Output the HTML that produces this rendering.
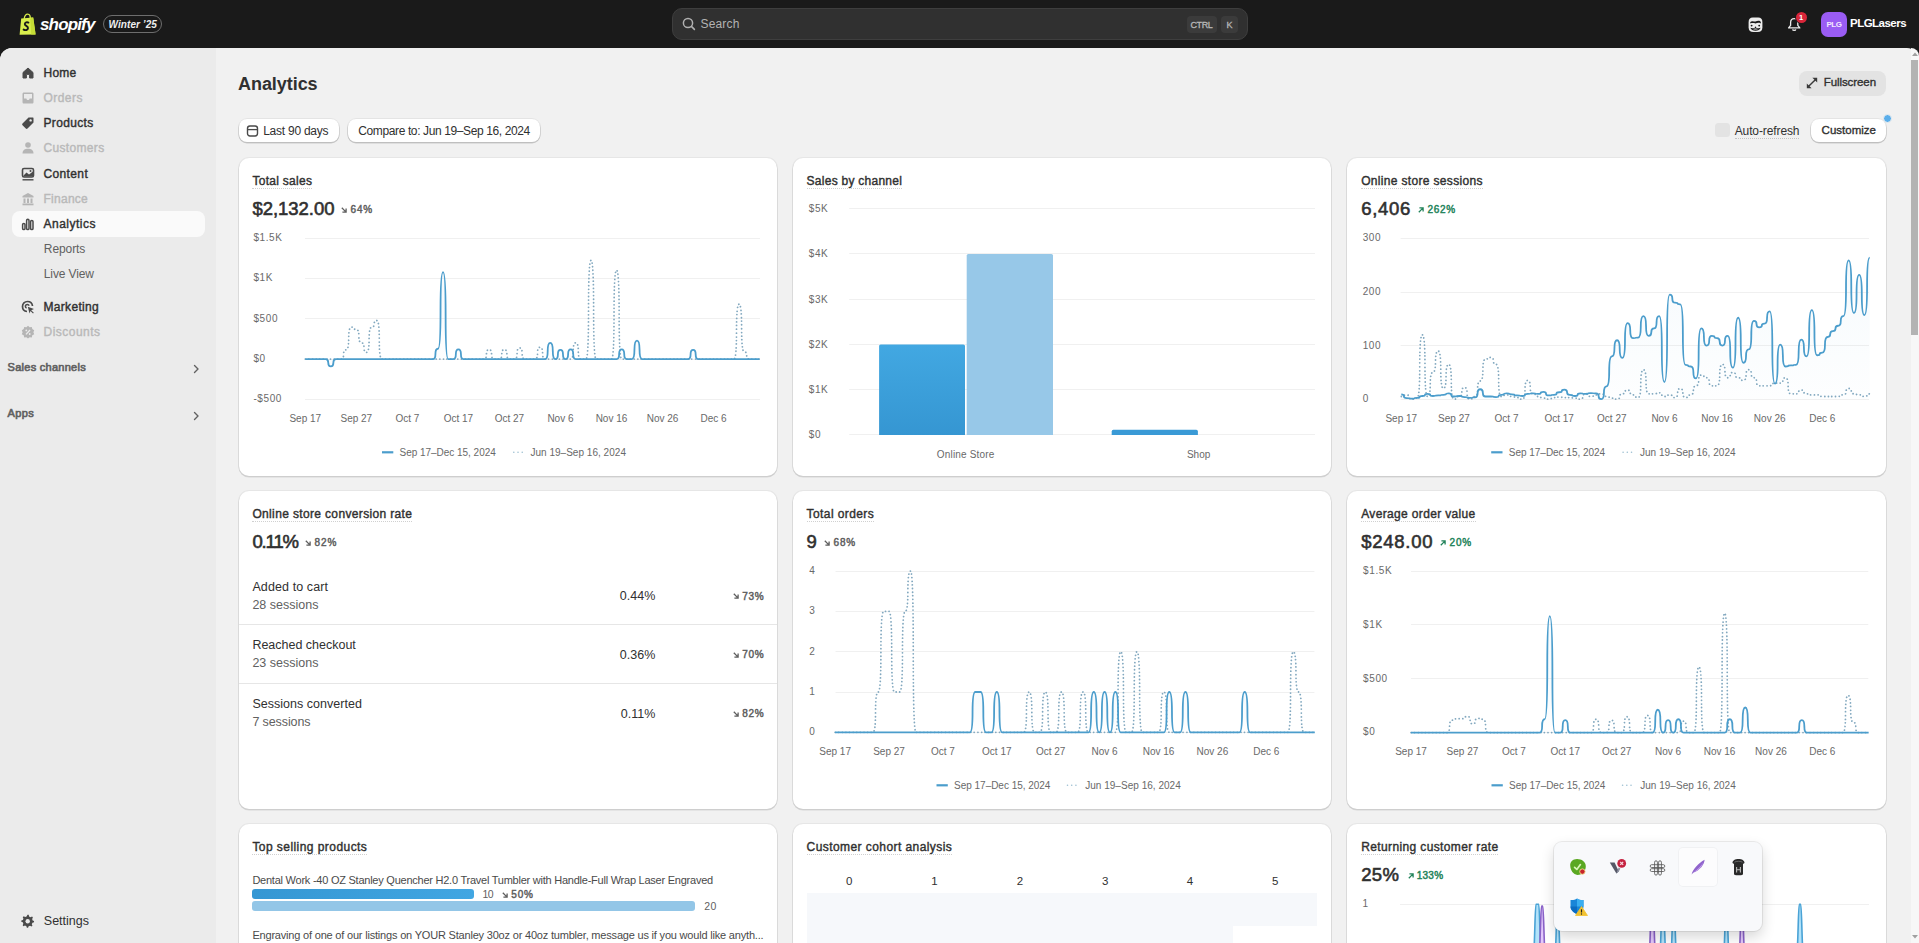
<!DOCTYPE html><html><head><meta charset="utf-8"><title>Analytics</title><style>
*{margin:0;padding:0;box-sizing:border-box}
html,body{width:1919px;height:943px;overflow:hidden;background:#1a1a1a;font-family:"Liberation Sans",sans-serif;color:#303030}
.t{position:absolute;white-space:nowrap}
.abs{position:absolute}
#main{position:absolute;left:0;top:48px;width:1919px;height:895px;background:#f1f1f1;border-radius:12px 12px 0 0;overflow:hidden}
#side{position:absolute;left:0;top:0;width:216px;height:895px;background:#ebebeb}
.card{position:absolute;background:#fff;border-radius:10px;box-shadow:0 0 0 1px rgba(0,0,0,.045),0 1px 0 0.5px rgba(0,0,0,.10)}
.btn{position:absolute;background:#fff;border-radius:8px;box-shadow:0 0 0 1px rgba(0,0,0,.05),0 1px 0 0.5px rgba(0,0,0,.16)}
.dotu{border-bottom:1px dotted #b5b5b5}
</style></head><body><svg class="abs" style="left:18px;top:13px" width="20" height="23" viewBox="0 0 20 23">
<path d="M3.2,5.6 L15.2,4.6 L17.6,21.4 L1.6,21.8 Z" fill="#d9ee4c"/>
<path d="M12.2,4.8 L15.2,4.6 L17.6,21.4 L13.2,21.6 Z" fill="#c5dc35"/>
<path d="M6.2,6 C6.4,2.4 8.4,1 9.8,1.2 C11.6,1.4 12.4,3.4 12.2,5.8" fill="none" stroke="#d9ee4c" stroke-width="1.3"/>
<path d="M10.4,9.6 C9.2,8.9 6.9,9.3 6.8,11 C6.7,13 10.2,12.8 10,15.2 C9.8,17.2 7.4,17.6 5.6,16.6" fill="none" stroke="#1a1a1a" stroke-width="1.9" stroke-linecap="round"/>
</svg>
<div class="t" style="top:13.80px;font-size:17px;line-height:22px;color:#ffffff;font-weight:700;font-style:italic;letter-spacing:-0.850px;left:40.00px">shopify</div>
<div class="abs" style="left:103px;top:15px;width:59px;height:18px;border:1.5px solid #6e6e6e;border-radius:9px"></div>
<div class="t" style="top:17.50px;font-size:10px;line-height:13px;color:#eeeeee;font-weight:700;font-style:italic;letter-spacing:0.080px;left:108.50px">Winter ’25</div>
<div class="abs" style="left:672px;top:8px;width:576px;height:32px;background:#303030;border:1px solid #3e3e3e;border-radius:10px"></div>
<svg class="abs" style="left:682px;top:17px" width="14" height="14" viewBox="0 0 14 14"><circle cx="6" cy="6" r="4.6" fill="none" stroke="#b0b0b0" stroke-width="1.5"/><path d="M9.4,9.4 L12.4,12.4" stroke="#b0b0b0" stroke-width="1.6" stroke-linecap="round"/></svg>
<div class="t" style="top:16.00px;font-size:12px;line-height:16px;color:#b3b3b3;letter-spacing:0.164px;left:700.50px">Search</div>
<div class="abs" style="left:1186.5px;top:16px;width:30px;height:17px;background:#3b3b3b;border-radius:4px"></div>
<div class="t" style="top:18.60px;font-size:9px;line-height:12px;color:#b8b8b8;-webkit-text-stroke:0.3px #b8b8b8;letter-spacing:-0.375px;left:1201.50px;transform:translateX(-50%)">CTRL</div>
<div class="abs" style="left:1221px;top:16px;width:17px;height:17px;background:#3b3b3b;border-radius:4px"></div>
<div class="t" style="top:18.60px;font-size:9px;line-height:12px;color:#b8b8b8;-webkit-text-stroke:0.3px #b8b8b8;left:1229.50px;transform:translateX(-50%)">K</div>
<svg class="abs" style="left:1747.5px;top:16.5px" width="15" height="15.5" viewBox="0 0 15 15.5">
<path d="M4.8,0.4 L10.2,0.4 C13,0.4 14.4,2 14.4,5 L14.4,10.4 C14.4,13.4 12.6,15 9.6,15 L5.4,15 C2.4,15 0.6,13.4 0.6,10.4 L0.6,5 C0.6,2 2,0.4 4.8,0.4 Z" fill="#ececec"/>
<path d="M2.2,5.2 C3.5,3.6 5.5,4.2 7.5,4.6 C9.5,3.6 12,3.4 12.9,5.2 L12.6,6.4 C11,5.6 9.5,5.8 7.5,6.4 C5.5,5.8 3.8,5.8 2.4,6.4 Z" fill="#1a1a1a"/>
<circle cx="3.6" cy="8.6" r="0.95" fill="#1a1a1a"/><circle cx="11.2" cy="8.6" r="0.95" fill="#1a1a1a"/>
<path d="M7.5,9.3 L8.5,10.9 L6.5,10.9 Z" fill="#1a1a1a"/>
<path d="M2.4,10.8 C3.2,14.6 11.8,14.6 12.6,10.8 C10.5,11.6 4.5,11.6 2.4,10.8 Z" fill="#1a1a1a"/>
<path d="M4.6,12.2 C6,12.6 9,12.6 10.4,12.2 C9.6,13.3 5.4,13.3 4.6,12.2 Z" fill="#ececec"/>
</svg>
<svg class="abs" style="left:1787px;top:17px" width="15" height="15" viewBox="0 0 15 15">
<path d="M7.2,1.6 C4.9,1.6 3.6,3.4 3.6,5.6 L3.6,8.4 L1.6,10.9 L12.8,10.9 L10.8,8.4 L10.8,5.6 C10.8,3.4 9.5,1.6 7.2,1.6 Z" fill="none" stroke="#ececec" stroke-width="1.3" stroke-linejoin="round"/>
<path d="M5.6,12.4 C5.8,13.8 8.6,13.8 8.8,12.4" fill="none" stroke="#ececec" stroke-width="1.3"/>
</svg>
<div class="abs" style="left:1795.5px;top:12.4px;width:11px;height:11px;border-radius:50%;background:#d9263a;box-shadow:0 0 0 1px #1a1a1a"></div>
<div class="t" style="top:13.40px;font-size:7.5px;line-height:9px;color:#ffffff;font-weight:700;left:1801.20px;transform:translateX(-50%)">1</div>
<div class="abs" style="left:1821px;top:12px;width:26px;height:25px;border-radius:7px;background:#9a5cf3"></div>
<div class="t" style="top:19.50px;font-size:8px;line-height:10px;color:#f3e8ff;font-weight:700;letter-spacing:-0.484px;left:1834.00px;transform:translateX(-50%)">PLG</div>
<div class="t" style="top:16.00px;font-size:11.5px;line-height:15px;color:#ffffff;font-weight:700;letter-spacing:-0.523px;left:1850.00px">PLGLasers</div>
<div id="main">
<div id="side"></div>
</div>
<div class="abs" style="left:11.5px;top:210.7px;width:193.3px;height:26px;background:#fafafa;border-radius:8px"></div>
<svg class="abs" style="left:20.5px;top:65.5px" width="14" height="14" viewBox="0 0 14 14"><path d="M2,6.5 L7,2 L12,6.5 L12,12 L8.6,12 L8.6,9 C8.6,8 5.4,8 5.4,9 L5.4,12 L2,12 Z" fill="#4a4a4a" stroke="#4a4a4a" stroke-width="1" stroke-linejoin="round"/></svg>
<div class="t" style="top:64.50px;font-size:12px;line-height:16px;color:#303030;-webkit-text-stroke:0.4px #303030;letter-spacing:0.246px;left:43.50px">Home</div>
<svg class="abs" style="left:20.5px;top:90.8px" width="14" height="14" viewBox="0 0 14 14"><path d="M1.5,3 C1.5,2 2,1.5 3,1.5 L11,1.5 C12,1.5 12.5,2 12.5,3 L12.5,11 C12.5,12 12,12.5 11,12.5 L3,12.5 C2,12.5 1.5,12 1.5,11 Z" fill="#b5b5b5"/><path d="M3,3 L11,3 L11,7.5 L8.6,7.5 C8.4,8.6 7.8,9 7,9 C6.2,9 5.6,8.6 5.4,7.5 L3,7.5 Z" fill="#ebebeb"/></svg>
<div class="t" style="top:89.80px;font-size:12px;line-height:16px;color:#b9b9b9;-webkit-text-stroke:0.4px #b9b9b9;letter-spacing:0.455px;left:43.50px">Orders</div>
<svg class="abs" style="left:20.5px;top:115.7px" width="14" height="14" viewBox="0 0 14 14"><path d="M7.5,1.5 L12,1.5 C12.3,1.5 12.5,1.7 12.5,2 L12.5,6.5 L6.5,12.5 C6,13 5.3,13 4.8,12.5 L1.5,9.2 C1,8.7 1,8 1.5,7.5 Z" fill="#4a4a4a"/><circle cx="9.6" cy="4.4" r="1.2" fill="#ebebeb"/></svg>
<div class="t" style="top:114.70px;font-size:12px;line-height:16px;color:#303030;-webkit-text-stroke:0.4px #303030;letter-spacing:0.332px;left:43.50px">Products</div>
<svg class="abs" style="left:20.5px;top:141px" width="14" height="14" viewBox="0 0 14 14"><circle cx="7" cy="4" r="2.8" fill="#b5b5b5"/><path d="M1.5,12.5 C1.5,9 4,7.8 7,7.8 C10,7.8 12.5,9 12.5,12.5 Z" fill="#b5b5b5"/></svg>
<div class="t" style="top:140.00px;font-size:12px;line-height:16px;color:#b9b9b9;-webkit-text-stroke:0.4px #b9b9b9;letter-spacing:0.332px;left:43.50px">Customers</div>
<svg class="abs" style="left:20.5px;top:166.6px" width="14" height="14" viewBox="0 0 14 14"><rect x="1.5" y="1.5" width="11" height="8.5" rx="1.5" fill="none" stroke="#4a4a4a" stroke-width="1.6"/><path d="M2.5,8.5 L5.5,5.5 L8,7.5 L12,4.5 L12,9.5 L2.5,9.5 Z" fill="#4a4a4a"/><circle cx="9.5" cy="4" r="1" fill="#4a4a4a"/><path d="M1.5,12.8 L12.5,12.8" stroke="#4a4a4a" stroke-width="1.4"/></svg>
<div class="t" style="top:165.60px;font-size:12px;line-height:16px;color:#303030;-webkit-text-stroke:0.4px #303030;letter-spacing:0.369px;left:43.50px">Content</div>
<svg class="abs" style="left:20.5px;top:191.5px" width="14" height="14" viewBox="0 0 14 14"><path d="M7,1 L12.5,4 L12.5,5.5 L1.5,5.5 L1.5,4 Z" fill="#b5b5b5"/><rect x="2.5" y="6.5" width="2" height="4.5" fill="#b5b5b5"/><rect x="6" y="6.5" width="2" height="4.5" fill="#b5b5b5"/><rect x="9.5" y="6.5" width="2" height="4.5" fill="#b5b5b5"/><rect x="1.5" y="11.5" width="11" height="1.8" fill="#b5b5b5"/></svg>
<div class="t" style="top:190.50px;font-size:12px;line-height:16px;color:#b9b9b9;-webkit-text-stroke:0.4px #b9b9b9;letter-spacing:0.259px;left:43.50px">Finance</div>
<svg class="abs" style="left:20.5px;top:216.5px" width="14" height="14" viewBox="0 0 14 14"><rect x="1.6" y="6.4" width="2.4" height="6.2" rx="1.2" fill="none" stroke="#4a4a4a" stroke-width="1.5"/><rect x="5.6" y="2.2" width="2.4" height="10.4" rx="1.2" fill="none" stroke="#4a4a4a" stroke-width="1.5"/><rect x="9.6" y="3.4" width="2.4" height="9.2" rx="1.2" fill="none" stroke="#4a4a4a" stroke-width="1.5"/></svg>
<div class="t" style="top:215.50px;font-size:12px;line-height:16px;color:#303030;-webkit-text-stroke:0.4px #303030;letter-spacing:0.498px;left:43.50px">Analytics</div>
<svg class="abs" style="left:20.5px;top:300px" width="14" height="14" viewBox="0 0 14 14"><path d="M11.5,6 C11.2,3.4 9.2,1.5 6.5,1.5 C3.7,1.5 1.5,3.7 1.5,6.5 C1.5,9.2 3.4,11.2 6,11.5" fill="none" stroke="#4a4a4a" stroke-width="1.7"/><path d="M8.2,5.6 C7.8,4.8 7.2,4.4 6.5,4.4 C5.3,4.4 4.4,5.3 4.4,6.5 C4.4,7.2 4.8,7.8 5.6,8.2" fill="none" stroke="#4a4a4a" stroke-width="1.5"/><path d="M6.8,6.8 L13,9 L10.2,10.2 L12.8,12.8 L12,13.5 L9.5,11 L8.5,13.5 Z" fill="#4a4a4a"/></svg>
<div class="t" style="top:299.00px;font-size:12px;line-height:16px;color:#303030;-webkit-text-stroke:0.4px #303030;letter-spacing:0.312px;left:43.50px">Marketing</div>
<svg class="abs" style="left:20.5px;top:325px" width="14" height="14" viewBox="0 0 14 14"><path d="M7,0.8 L8.6,2.2 L10.8,2 L11.3,4.1 L13.2,5.2 L12.4,7.2 L13.2,9.2 L11.3,10.3 L10.8,12.4 L8.6,12.2 L7,13.6 L5.4,12.2 L3.2,12.4 L2.7,10.3 L0.8,9.2 L1.6,7.2 L0.8,5.2 L2.7,4.1 L3.2,2 L5.4,2.2 Z" fill="#b5b5b5"/><path d="M5,9.4 L9,5" stroke="#ebebeb" stroke-width="1.3"/><circle cx="5.3" cy="5.4" r="0.9" fill="#ebebeb"/><circle cx="8.7" cy="9" r="0.9" fill="#ebebeb"/></svg>
<div class="t" style="top:324.00px;font-size:12px;line-height:16px;color:#b9b9b9;-webkit-text-stroke:0.4px #b9b9b9;letter-spacing:0.479px;left:43.50px">Discounts</div>
<div class="t" style="top:240.80px;font-size:12px;line-height:16px;color:#616161;letter-spacing:-0.074px;left:43.80px">Reports</div>
<div class="t" style="top:265.70px;font-size:12px;line-height:16px;color:#616161;letter-spacing:-0.127px;left:43.80px">Live View</div>
<div class="t" style="top:360.00px;font-size:11px;line-height:14px;color:#616161;-webkit-text-stroke:0.65px #616161;letter-spacing:0.267px;left:7.60px">Sales channels</div>
<div class="t" style="top:406.40px;font-size:11px;line-height:14px;color:#616161;-webkit-text-stroke:0.65px #616161;letter-spacing:0.352px;left:7.60px">Apps</div>
<svg class="abs" style="left:191px;top:362.5px" width="10" height="12" viewBox="0 0 10 12"><path d="M3.5,2.5 L7,6 L3.5,9.5" fill="none" stroke="#616161" stroke-width="1.4" stroke-linecap="round" stroke-linejoin="round"/></svg>
<svg class="abs" style="left:191px;top:409.5px" width="10" height="12" viewBox="0 0 10 12"><path d="M3.5,2.5 L7,6 L3.5,9.5" fill="none" stroke="#616161" stroke-width="1.4" stroke-linecap="round" stroke-linejoin="round"/></svg>
<svg class="abs" style="left:20.5px;top:913.5px" width="14" height="14" viewBox="0 0 14 14"><path d="M7,0.8 L8.3,0.8 L8.7,2.6 L10.2,3.4 L11.9,2.7 L12.8,3.7 L12,5.3 L12.5,6.9 L14,7.6 L14,8.9 L12.3,9.4 L11.6,10.9 L12.3,12.5 L11.3,13.4 L9.7,12.6 L8.2,13.2 L7.6,14.8 L6.3,14.8 L5.8,13.1 L4.3,12.4 L2.7,13.1 L1.8,12.1 L2.5,10.5 L1.9,9 L0.3,8.3 L0.3,7 L2,6.5 L2.6,5 L1.9,3.4 L2.9,2.5 L4.5,3.3 L6,2.6 Z" fill="#4a4a4a" transform="scale(0.93)"/><circle cx="6.7" cy="7.2" r="2.2" fill="#ebebeb"/></svg>
<div class="t" style="top:912.90px;font-size:12.5px;line-height:16px;color:#303030;letter-spacing:0.004px;left:43.80px">Settings</div>
<div class="t" style="top:72.70px;font-size:18px;line-height:23px;color:#303030;font-weight:700;letter-spacing:-0.051px;left:238.00px">Analytics</div>
<div class="btn" style="left:238.7px;top:119px;width:100.5px;height:23.4px"></div>
<svg class="abs" style="left:246px;top:124px" width="13" height="14" viewBox="0 0 13 14"><rect x="1.5" y="2" width="10" height="10" rx="2.4" fill="none" stroke="#4a4a4a" stroke-width="1.4"/><path d="M1.8,5.6 L11.2,5.6" stroke="#4a4a4a" stroke-width="1.3"/></svg>
<div class="t" style="top:122.50px;font-size:12px;line-height:16px;color:#303030;letter-spacing:-0.243px;left:263.20px">Last 90 days</div>
<div class="btn" style="left:347.8px;top:119px;width:192.3px;height:23.4px"></div>
<div class="t" style="top:122.50px;font-size:12px;line-height:16px;color:#303030;letter-spacing:-0.384px;left:358.30px">Compare to: Jun 19–Sep 16, 2024</div>
<div class="abs" style="left:1798.6px;top:71px;width:87.7px;height:24.7px;background:#e3e3e3;border-radius:8px"></div>
<svg class="abs" style="left:1805px;top:76px" width="14" height="14" viewBox="0 0 14 14"><path d="M3.4,10.6 L10.6,3.4" stroke="#3a3a3a" stroke-width="1.4"/><path d="M12.2,1.8 L12.2,6.6 L7.4,1.8 Z" fill="#3a3a3a"/><path d="M1.8,12.2 L1.8,7.4 L6.6,12.2 Z" fill="#3a3a3a"/></svg>
<div class="t" style="top:74.80px;font-size:11.5px;line-height:15px;color:#303030;-webkit-text-stroke:0.35px #303030;letter-spacing:-0.075px;left:1823.70px">Fullscreen</div>
<div class="abs" style="left:1715px;top:122.7px;width:14.7px;height:14.8px;background:#e3e3e3;border-radius:3.5px"></div>
<div class="t" style="top:122.50px;font-size:12px;line-height:16px;color:#303030;letter-spacing:-0.110px;left:1734.70px">Auto-refresh</div>
<div class="abs" style="left:1734.7px;top:137.5px;width:64.7px;border-bottom:1px dotted #c4c4c4"></div>
<div class="btn" style="left:1811.3px;top:119px;width:75px;height:23.3px"></div>
<div class="t" style="top:123.00px;font-size:11.5px;line-height:15px;color:#303030;-webkit-text-stroke:0.35px #303030;letter-spacing:0.010px;left:1821.60px">Customize</div>
<div class="abs" style="left:1882.5px;top:113.9px;width:9px;height:9px;border-radius:50%;background:#5aaeea;border:1.5px solid #f1f1f1"></div>
<div class="card" style="left:238.6px;top:158.4px;width:538.6px;height:317.6px"></div>
<div class="card" style="left:792.8px;top:158.4px;width:538.6px;height:317.6px"></div>
<div class="card" style="left:1347.4px;top:158.4px;width:538.6px;height:317.6px"></div>
<div class="card" style="left:238.6px;top:491.3px;width:538.6px;height:317.6px"></div>
<div class="card" style="left:792.8px;top:491.3px;width:538.6px;height:317.6px"></div>
<div class="card" style="left:1347.4px;top:491.3px;width:538.6px;height:317.6px"></div>
<div class="card" style="left:238.6px;top:824.4px;width:538.6px;height:317.6px"></div>
<div class="card" style="left:792.8px;top:824.4px;width:538.6px;height:317.6px"></div>
<div class="card" style="left:1347.4px;top:824.4px;width:538.6px;height:317.6px"></div>
<div class="t" style="top:172.60px;font-size:12px;line-height:16px;color:#303030;-webkit-text-stroke:0.4px #303030;letter-spacing:0.283px;left:252.40px">Total sales</div><div class="abs" style="left:252.40px;top:187.80px;width:59.80px;border-bottom:1px dotted #d0d0d0"></div>
<div class="t" style="top:172.60px;font-size:12px;line-height:16px;color:#303030;-webkit-text-stroke:0.4px #303030;letter-spacing:0.258px;left:806.60px">Sales by channel</div><div class="abs" style="left:806.60px;top:187.80px;width:95.50px;border-bottom:1px dotted #d0d0d0"></div>
<div class="t" style="top:172.60px;font-size:12px;line-height:16px;color:#303030;-webkit-text-stroke:0.4px #303030;letter-spacing:0.328px;left:1361.20px">Online store sessions</div><div class="abs" style="left:1361.20px;top:187.80px;width:121.60px;border-bottom:1px dotted #d0d0d0"></div>
<div class="t" style="top:506.00px;font-size:12px;line-height:16px;color:#303030;-webkit-text-stroke:0.4px #303030;letter-spacing:0.352px;left:252.40px">Online store conversion rate</div><div class="abs" style="left:252.40px;top:521.20px;width:159.90px;border-bottom:1px dotted #d0d0d0"></div>
<div class="t" style="top:506.00px;font-size:12px;line-height:16px;color:#303030;-webkit-text-stroke:0.4px #303030;letter-spacing:0.401px;left:806.60px">Total orders</div><div class="abs" style="left:806.60px;top:521.20px;width:67.50px;border-bottom:1px dotted #d0d0d0"></div>
<div class="t" style="top:506.00px;font-size:12px;line-height:16px;color:#303030;-webkit-text-stroke:0.4px #303030;letter-spacing:0.346px;left:1361.20px">Average order value</div><div class="abs" style="left:1361.20px;top:521.20px;width:114.40px;border-bottom:1px dotted #d0d0d0"></div>
<div class="t" style="top:838.50px;font-size:12px;line-height:16px;color:#303030;-webkit-text-stroke:0.4px #303030;letter-spacing:0.443px;left:252.40px">Top selling products</div><div class="abs" style="left:252.40px;top:853.70px;width:114.90px;border-bottom:1px dotted #d0d0d0"></div>
<div class="t" style="top:838.50px;font-size:12px;line-height:16px;color:#303030;-webkit-text-stroke:0.4px #303030;letter-spacing:0.426px;left:806.60px">Customer cohort analysis</div><div class="abs" style="left:806.60px;top:853.70px;width:145.60px;border-bottom:1px dotted #d0d0d0"></div>
<div class="t" style="top:838.70px;font-size:12px;line-height:16px;color:#303030;-webkit-text-stroke:0.4px #303030;letter-spacing:0.374px;left:1361.20px">Returning customer rate</div><div class="abs" style="left:1361.20px;top:853.90px;width:137.30px;border-bottom:1px dotted #d0d0d0"></div>
<div class="t" style="top:196.60px;font-size:18.5px;line-height:24px;color:#303030;-webkit-text-stroke:0.6px #303030;letter-spacing:-0.028px;left:252.40px">$2,132.00</div>
<svg class="abs" style="left:341.40px;top:206.60px" width="6" height="6" viewBox="0 0 6 6"><path d="M0.8,0.8 L4.6,4.6 M5.1,1.4 L5.1,5.1 L1.4,5.1" fill="none" stroke="#5e5e5e" stroke-width="1.3" stroke-linecap="butt" stroke-linejoin="miter"/></svg>
<div class="t" style="top:202.90px;font-size:10px;line-height:13px;color:#5e5e5e;-webkit-text-stroke:0.45px #5e5e5e;letter-spacing:0.795px;left:350.60px">64%</div>
<div class="t" style="top:196.60px;font-size:18.5px;line-height:24px;color:#303030;-webkit-text-stroke:0.6px #303030;letter-spacing:0.707px;left:1361.20px">6,406</div>
<svg class="abs" style="left:1418.20px;top:206.60px" width="6" height="6" viewBox="0 0 6 6"><path d="M0.8,5.2 L4.6,1.4 M1.4,0.9 L5.1,0.9 L5.1,4.6" fill="none" stroke="#22835a" stroke-width="1.3" stroke-linecap="butt" stroke-linejoin="miter"/></svg>
<div class="t" style="top:202.90px;font-size:10px;line-height:13px;color:#22835a;-webkit-text-stroke:0.45px #22835a;letter-spacing:0.705px;left:1427.40px">262%</div>
<div class="t" style="top:529.70px;font-size:18.5px;line-height:24px;color:#303030;-webkit-text-stroke:0.6px #303030;letter-spacing:-1.113px;left:252.40px">0.11%</div>
<svg class="abs" style="left:305.30px;top:539.70px" width="6" height="6" viewBox="0 0 6 6"><path d="M0.8,0.8 L4.6,4.6 M5.1,1.4 L5.1,5.1 L1.4,5.1" fill="none" stroke="#5e5e5e" stroke-width="1.3" stroke-linecap="butt" stroke-linejoin="miter"/></svg>
<div class="t" style="top:536.00px;font-size:10px;line-height:13px;color:#5e5e5e;-webkit-text-stroke:0.45px #5e5e5e;letter-spacing:0.928px;left:314.50px">82%</div>
<div class="t" style="top:529.70px;font-size:18.5px;line-height:24px;color:#303030;-webkit-text-stroke:0.6px #303030;letter-spacing:0.419px;left:806.60px">9</div>
<svg class="abs" style="left:824.40px;top:539.70px" width="6" height="6" viewBox="0 0 6 6"><path d="M0.8,0.8 L4.6,4.6 M5.1,1.4 L5.1,5.1 L1.4,5.1" fill="none" stroke="#5e5e5e" stroke-width="1.3" stroke-linecap="butt" stroke-linejoin="miter"/></svg>
<div class="t" style="top:536.00px;font-size:10px;line-height:13px;color:#5e5e5e;-webkit-text-stroke:0.45px #5e5e5e;letter-spacing:0.795px;left:833.60px">68%</div>
<div class="t" style="top:529.70px;font-size:18.5px;line-height:24px;color:#303030;-webkit-text-stroke:0.6px #303030;letter-spacing:0.753px;left:1361.20px">$248.00</div>
<svg class="abs" style="left:1440.20px;top:539.70px" width="6" height="6" viewBox="0 0 6 6"><path d="M0.8,5.2 L4.6,1.4 M1.4,0.9 L5.1,0.9 L5.1,4.6" fill="none" stroke="#22835a" stroke-width="1.3" stroke-linecap="butt" stroke-linejoin="miter"/></svg>
<div class="t" style="top:536.00px;font-size:10px;line-height:13px;color:#22835a;-webkit-text-stroke:0.45px #22835a;letter-spacing:0.928px;left:1449.40px">20%</div>
<div class="t" style="top:862.70px;font-size:18.5px;line-height:24px;color:#303030;-webkit-text-stroke:0.6px #303030;letter-spacing:0.328px;left:1361.20px">25%</div>
<svg class="abs" style="left:1407.50px;top:872.60px" width="6" height="6" viewBox="0 0 6 6"><path d="M0.8,5.2 L4.6,1.4 M1.4,0.9 L5.1,0.9 L5.1,4.6" fill="none" stroke="#22835a" stroke-width="1.3" stroke-linecap="butt" stroke-linejoin="miter"/></svg>
<div class="t" style="top:868.90px;font-size:10px;line-height:13px;color:#22835a;-webkit-text-stroke:0.45px #22835a;letter-spacing:0.255px;left:1416.70px">133%</div>
<div class="t" style="top:578.60px;font-size:12.5px;line-height:16px;color:#303030;letter-spacing:0.104px;left:252.40px">Added to cart</div>
<div class="t" style="top:596.70px;font-size:12.5px;line-height:16px;color:#616161;letter-spacing:0.008px;left:252.40px">28 sessions</div>
<div class="t" style="top:588.00px;font-size:12.5px;line-height:16px;color:#303030;right:1263.70px">0.44%</div>
<svg class="abs" style="left:733.10px;top:593.40px" width="6" height="6" viewBox="0 0 6 6"><path d="M0.8,0.8 L4.6,4.6 M5.1,1.4 L5.1,5.1 L1.4,5.1" fill="none" stroke="#5e5e5e" stroke-width="1.3" stroke-linecap="butt" stroke-linejoin="miter"/></svg>
<div class="t" style="top:589.70px;font-size:10px;line-height:13px;color:#5e5e5e;-webkit-text-stroke:0.45px #5e5e5e;letter-spacing:0.628px;left:742.30px">73%</div>
<div class="t" style="top:636.90px;font-size:12.5px;line-height:16px;color:#303030;letter-spacing:-0.009px;left:252.40px">Reached checkout</div>
<div class="t" style="top:654.70px;font-size:12.5px;line-height:16px;color:#616161;letter-spacing:-0.001px;left:252.40px">23 sessions</div>
<div class="t" style="top:646.60px;font-size:12.5px;line-height:16px;color:#303030;right:1263.70px">0.36%</div>
<svg class="abs" style="left:733.10px;top:652.00px" width="6" height="6" viewBox="0 0 6 6"><path d="M0.8,0.8 L4.6,4.6 M5.1,1.4 L5.1,5.1 L1.4,5.1" fill="none" stroke="#5e5e5e" stroke-width="1.3" stroke-linecap="butt" stroke-linejoin="miter"/></svg>
<div class="t" style="top:648.30px;font-size:10px;line-height:13px;color:#5e5e5e;-webkit-text-stroke:0.45px #5e5e5e;letter-spacing:0.628px;left:742.30px">70%</div>
<div class="t" style="top:695.50px;font-size:12.5px;line-height:16px;color:#303030;letter-spacing:0.023px;left:252.40px">Sessions converted</div>
<div class="t" style="top:713.60px;font-size:12.5px;line-height:16px;color:#616161;letter-spacing:-0.106px;left:252.40px">7 sessions</div>
<div class="t" style="top:705.60px;font-size:12.5px;line-height:16px;color:#303030;right:1263.70px">0.11%</div>
<svg class="abs" style="left:733.10px;top:711.00px" width="6" height="6" viewBox="0 0 6 6"><path d="M0.8,0.8 L4.6,4.6 M5.1,1.4 L5.1,5.1 L1.4,5.1" fill="none" stroke="#5e5e5e" stroke-width="1.3" stroke-linecap="butt" stroke-linejoin="miter"/></svg>
<div class="t" style="top:707.30px;font-size:10px;line-height:13px;color:#5e5e5e;-webkit-text-stroke:0.45px #5e5e5e;letter-spacing:0.628px;left:742.30px">82%</div>
<div class="abs" style="left:238.6px;top:623.8px;width:538.6px;height:1px;background:#e6e6e6"></div>
<div class="abs" style="left:238.6px;top:682.8px;width:538.6px;height:1px;background:#e6e6e6"></div>
<div class="t" style="top:873.40px;font-size:11px;line-height:14px;color:#4a4a4a;letter-spacing:-0.240px;left:252.40px">Dental Work -40 OZ Stanley Quencher H2.0 Travel Tumbler with Handle-Full Wrap Laser Engraved</div>
<div class="abs" style="left:252.2px;top:889.4px;width:221.4px;height:9.6px;border-radius:3px;background:linear-gradient(90deg,#3597d3,#41a6e2)"></div>
<div class="t" style="top:887.40px;font-size:10.5px;line-height:14px;color:#616161;letter-spacing:-0.444px;left:482.40px">10</div>
<svg class="abs" style="left:502.10px;top:891.80px" width="6" height="6" viewBox="0 0 6 6"><path d="M0.8,0.8 L4.6,4.6 M5.1,1.4 L5.1,5.1 L1.4,5.1" fill="none" stroke="#5e5e5e" stroke-width="1.3" stroke-linecap="butt" stroke-linejoin="miter"/></svg>
<div class="t" style="top:888.10px;font-size:10px;line-height:13px;color:#5e5e5e;-webkit-text-stroke:0.45px #5e5e5e;letter-spacing:0.795px;left:511.30px">50%</div>
<div class="abs" style="left:252.2px;top:901.1px;width:442.6px;height:9.6px;border-radius:3px;background:#93c6e7"></div>
<div class="t" style="top:899.30px;font-size:10.5px;line-height:14px;color:#616161;letter-spacing:0.406px;left:704.20px">20</div>
<div class="t" style="top:927.60px;font-size:11px;line-height:14px;color:#4a4a4a;letter-spacing:-0.192px;left:252.40px">Engraving of one of our listings on YOUR Stanley 30oz or 40oz tumbler, message us if you would like anyth...</div>
<div class="t" style="top:874.00px;font-size:11.5px;line-height:15px;color:#303030;left:849.20px;transform:translateX(-50%)">0</div>
<div class="t" style="top:874.00px;font-size:11.5px;line-height:15px;color:#303030;left:934.40px;transform:translateX(-50%)">1</div>
<div class="t" style="top:874.00px;font-size:11.5px;line-height:15px;color:#303030;left:1019.90px;transform:translateX(-50%)">2</div>
<div class="t" style="top:874.00px;font-size:11.5px;line-height:15px;color:#303030;left:1105.10px;transform:translateX(-50%)">3</div>
<div class="t" style="top:874.00px;font-size:11.5px;line-height:15px;color:#303030;left:1190.00px;transform:translateX(-50%)">4</div>
<div class="t" style="top:874.00px;font-size:11.5px;line-height:15px;color:#303030;left:1275.20px;transform:translateX(-50%)">5</div>
<div class="abs" style="left:806.9px;top:893.2px;width:510.6px;height:50px;background:#f6f8fb"></div>
<div class="abs" style="left:1233px;top:925.9px;width:84.5px;height:20px;background:#ffffff"></div>
<svg class="abs" style="left:0;top:0" width="1919" height="943" viewBox="0 0 1919 943"><defs><linearGradient id="ga" x1="0" y1="0" x2="0" y2="1"><stop offset="0" stop-color="#4a9fd2" stop-opacity="0.05"/><stop offset="1" stop-color="#4a9fd2" stop-opacity="0.01"/></linearGradient><linearGradient id="gb" x1="0" y1="0" x2="0" y2="1"><stop offset="0" stop-color="#42a8e2"/><stop offset="1" stop-color="#3596d2"/></linearGradient></defs><path d="M305.00,238.50 L760.00,238.50" stroke="#f0f0f0" stroke-width="1"/><path d="M305.00,278.50 L760.00,278.50" stroke="#f0f0f0" stroke-width="1"/><path d="M305.00,318.50 L760.00,318.50" stroke="#f0f0f0" stroke-width="1"/><path d="M305.00,359.50 L760.00,359.50" stroke="#f0f0f0" stroke-width="1"/><path d="M305.00,399.50 L760.00,399.50" stroke="#f0f0f0" stroke-width="1"/><path d="M305.30,359.10Q307.85,359.10 307.85,359.10Q307.85,359.10 310.40,359.10Q312.95,359.10 312.95,359.10Q312.95,359.10 315.51,359.10Q318.06,359.10 318.06,359.10Q318.06,359.10 320.61,359.10Q323.16,359.10 323.16,359.10Q323.16,359.10 325.71,359.10Q328.26,359.10 328.26,359.10Q328.26,359.10 330.81,359.10Q333.37,359.10 333.37,359.10Q333.37,359.10 335.92,359.10Q338.47,359.10 338.47,359.10Q338.47,359.10 341.02,359.10Q343.57,359.10 343.57,354.48Q343.57,349.85 346.12,349.85Q348.68,349.85 348.68,338.52Q348.68,327.18 351.23,327.18Q353.78,327.18 353.78,328.31Q353.78,329.43 356.33,329.43Q358.88,329.43 358.88,336.11Q358.88,342.78 361.43,342.78Q363.98,342.78 363.98,347.60Q363.98,352.43 366.54,352.43Q369.09,352.43 369.09,339.80Q369.09,327.18 371.64,327.18Q374.19,327.18 374.19,323.84Q374.19,320.51 376.74,320.51Q379.29,320.51 379.29,339.80Q379.29,359.10 381.85,359.10Q384.40,359.10 384.40,359.10Q384.40,359.10 386.95,359.10Q389.50,359.10 389.50,359.10Q389.50,359.10 392.05,359.10Q394.60,359.10 394.60,359.10Q394.60,359.10 397.15,359.10Q399.71,359.10 399.71,359.10Q399.71,359.10 402.26,359.10Q404.81,359.10 404.81,359.10Q404.81,359.10 407.36,359.10Q409.91,359.10 409.91,359.10Q409.91,359.10 412.46,359.10Q415.01,359.10 415.01,359.10Q415.01,359.10 417.57,359.10Q420.12,359.10 420.12,359.10Q420.12,359.10 422.67,359.10Q425.22,359.10 425.22,359.10Q425.22,359.10 427.77,359.10Q430.32,359.10 430.32,359.10Q430.32,359.10 432.88,359.10Q435.43,359.10 435.43,359.10Q435.43,359.10 437.98,359.10Q440.53,359.10 440.53,359.10Q440.53,359.10 443.08,359.10Q445.63,359.10 445.63,359.10Q445.63,359.10 448.18,359.10Q450.74,359.10 450.74,359.10Q450.74,359.10 453.29,359.10Q455.84,359.10 455.84,359.10Q455.84,359.10 458.39,359.10Q460.94,359.10 460.94,359.10Q460.94,359.10 463.49,359.10Q466.04,359.10 466.04,359.10Q466.04,359.10 468.60,359.10Q471.15,359.10 471.15,359.10Q471.15,359.10 473.70,359.10Q476.25,359.10 476.25,359.10Q476.25,359.10 478.80,359.10Q481.35,359.10 481.35,359.10Q481.35,359.10 483.90,359.10Q486.46,359.10 486.46,354.28Q486.46,349.45 489.01,349.45Q491.56,349.45 491.56,354.28Q491.56,359.10 494.11,359.10Q496.66,359.10 496.66,359.10Q496.66,359.10 499.21,359.10Q501.77,359.10 501.77,354.28Q501.77,349.45 504.32,349.45Q506.87,349.45 506.87,354.28Q506.87,359.10 509.42,359.10Q511.97,359.10 511.97,359.10Q511.97,359.10 514.52,359.10Q517.07,359.10 517.07,353.51Q517.07,347.92 519.63,347.92Q522.18,347.92 522.18,353.51Q522.18,359.10 524.73,359.10Q527.28,359.10 527.28,359.10Q527.28,359.10 529.83,359.10Q532.38,359.10 532.38,359.10Q532.38,359.10 534.93,359.10Q537.49,359.10 537.49,353.15Q537.49,347.20 540.04,347.20Q542.59,347.20 542.59,353.15Q542.59,359.10 545.14,359.10Q547.69,359.10 547.69,359.10Q547.69,359.10 550.24,359.10Q552.80,359.10 552.80,359.10Q552.80,359.10 555.35,359.10Q557.90,359.10 557.90,359.10Q557.90,359.10 560.45,359.10Q563.00,359.10 563.00,359.10Q563.00,359.10 565.55,359.10Q568.10,359.10 568.10,359.10Q568.10,359.10 570.66,359.10Q573.21,359.10 573.21,350.94Q573.21,342.78 575.76,342.78Q578.31,342.78 578.31,350.94Q578.31,359.10 580.86,359.10Q583.41,359.10 583.41,359.10Q583.41,359.10 585.96,359.10Q588.52,359.10 588.52,309.73Q588.52,260.37 591.07,260.37Q593.62,260.37 593.62,309.73Q593.62,359.10 596.17,359.10Q598.72,359.10 598.72,359.10Q598.72,359.10 601.27,359.10Q603.83,359.10 603.83,359.10Q603.83,359.10 606.38,359.10Q608.93,359.10 608.93,359.10Q608.93,359.10 611.48,359.10Q614.03,359.10 614.03,314.60Q614.03,270.10 616.58,270.10Q619.13,270.10 619.13,314.60Q619.13,359.10 621.69,359.10Q624.24,359.10 624.24,359.10Q624.24,359.10 626.79,359.10Q629.34,359.10 629.34,359.10Q629.34,359.10 631.89,359.10Q634.44,359.10 634.44,359.10Q634.44,359.10 637.00,359.10Q639.55,359.10 639.55,359.10Q639.55,359.10 642.10,359.10Q644.65,359.10 644.65,359.10Q644.65,359.10 647.20,359.10Q649.75,359.10 649.75,359.10Q649.75,359.10 652.30,359.10Q654.86,359.10 654.86,359.10Q654.86,359.10 657.41,359.10Q659.96,359.10 659.96,359.10Q659.96,359.10 662.51,359.10Q665.06,359.10 665.06,359.10Q665.06,359.10 667.61,359.10Q670.16,359.10 670.16,359.10Q670.16,359.10 672.72,359.10Q675.27,359.10 675.27,359.10Q675.27,359.10 677.82,359.10Q680.37,359.10 680.37,359.10Q680.37,359.10 682.92,359.10Q685.47,359.10 685.47,359.10Q685.47,359.10 688.02,359.10Q690.58,359.10 690.58,359.10Q690.58,359.10 693.13,359.10Q695.68,359.10 695.68,359.10Q695.68,359.10 698.23,359.10Q700.78,359.10 700.78,359.10Q700.78,359.10 703.33,359.10Q705.89,359.10 705.89,359.10Q705.89,359.10 708.44,359.10Q710.99,359.10 710.99,359.10Q710.99,359.10 713.54,359.10Q716.09,359.10 716.09,359.10Q716.09,359.10 718.64,359.10Q721.19,359.10 721.19,359.10Q721.19,359.10 723.75,359.10Q726.30,359.10 726.30,359.10Q726.30,359.10 728.85,359.10Q731.40,359.10 731.40,359.10Q731.40,359.10 733.95,359.10Q736.50,359.10 736.50,331.64Q736.50,304.19 739.06,304.19Q741.61,304.19 741.61,327.95Q741.61,351.70 744.16,351.70Q746.71,351.70 746.71,355.40Q746.71,359.10 749.26,359.10Q751.81,359.10 751.81,359.10Q751.81,359.10 754.36,359.10Q756.92,359.10 756.92,359.10Q756.92,359.10 759.47,359.10" fill="none" stroke="#82a8bf" stroke-width="1.8" stroke-dasharray="0.01 3.6" stroke-linecap="round"/><path d="M305.30,359.10Q307.85,359.10 307.85,359.10Q307.85,359.10 310.40,359.10Q312.95,359.10 312.95,359.10Q312.95,359.10 315.51,359.10Q318.06,359.10 318.06,359.10Q318.06,359.10 320.61,359.10Q323.16,359.10 323.16,359.10Q323.16,359.10 325.71,359.10Q328.26,359.10 328.26,362.72Q328.26,366.34 330.81,366.34Q333.37,366.34 333.37,362.72Q333.37,359.10 335.92,359.10Q338.47,359.10 338.47,359.10Q338.47,359.10 341.02,359.10Q343.57,359.10 343.57,359.10Q343.57,359.10 346.12,359.10Q348.68,359.10 348.68,359.10Q348.68,359.10 351.23,359.10Q353.78,359.10 353.78,359.10Q353.78,359.10 356.33,359.10Q358.88,359.10 358.88,359.10Q358.88,359.10 361.43,359.10Q363.98,359.10 363.98,359.10Q363.98,359.10 366.54,359.10Q369.09,359.10 369.09,359.10Q369.09,359.10 371.64,359.10Q374.19,359.10 374.19,359.10Q374.19,359.10 376.74,359.10Q379.29,359.10 379.29,359.10Q379.29,359.10 381.85,359.10Q384.40,359.10 384.40,359.10Q384.40,359.10 386.95,359.10Q389.50,359.10 389.50,359.10Q389.50,359.10 392.05,359.10Q394.60,359.10 394.60,359.10Q394.60,359.10 397.15,359.10Q399.71,359.10 399.71,359.10Q399.71,359.10 402.26,359.10Q404.81,359.10 404.81,359.10Q404.81,359.10 407.36,359.10Q409.91,359.10 409.91,359.10Q409.91,359.10 412.46,359.10Q415.01,359.10 415.01,359.10Q415.01,359.10 417.57,359.10Q420.12,359.10 420.12,359.10Q420.12,359.10 422.67,359.10Q425.22,359.10 425.22,359.10Q425.22,359.10 427.77,359.10Q430.32,359.10 430.32,359.10Q430.32,359.10 432.88,359.10Q435.43,359.10 435.43,353.91Q435.43,348.73 437.98,348.73Q440.53,348.73 440.53,310.38Q440.53,272.03 443.08,272.03Q445.63,272.03 445.63,315.56Q445.63,359.10 448.18,359.10Q450.74,359.10 450.74,359.10Q450.74,359.10 453.29,359.10Q455.84,359.10 455.84,354.28Q455.84,349.45 458.39,349.45Q460.94,349.45 460.94,354.28Q460.94,359.10 463.49,359.10Q466.04,359.10 466.04,359.10Q466.04,359.10 468.60,359.10Q471.15,359.10 471.15,359.10Q471.15,359.10 473.70,359.10Q476.25,359.10 476.25,359.10Q476.25,359.10 478.80,359.10Q481.35,359.10 481.35,359.10Q481.35,359.10 483.90,359.10Q486.46,359.10 486.46,359.10Q486.46,359.10 489.01,359.10Q491.56,359.10 491.56,359.10Q491.56,359.10 494.11,359.10Q496.66,359.10 496.66,359.10Q496.66,359.10 499.21,359.10Q501.77,359.10 501.77,359.10Q501.77,359.10 504.32,359.10Q506.87,359.10 506.87,359.10Q506.87,359.10 509.42,359.10Q511.97,359.10 511.97,359.10Q511.97,359.10 514.52,359.10Q517.07,359.10 517.07,359.10Q517.07,359.10 519.63,359.10Q522.18,359.10 522.18,359.10Q522.18,359.10 524.73,359.10Q527.28,359.10 527.28,359.10Q527.28,359.10 529.83,359.10Q532.38,359.10 532.38,359.10Q532.38,359.10 534.93,359.10Q537.49,359.10 537.49,359.10Q537.49,359.10 540.04,359.10Q542.59,359.10 542.59,359.10Q542.59,359.10 545.14,359.10Q547.69,359.10 547.69,350.94Q547.69,342.78 550.24,342.78Q552.80,342.78 552.80,350.94Q552.80,359.10 555.35,359.10Q557.90,359.10 557.90,354.52Q557.90,349.93 560.45,349.93Q563.00,349.93 563.00,354.52Q563.00,359.10 565.55,359.10Q568.10,359.10 568.10,354.28Q568.10,349.45 570.66,349.45Q573.21,349.45 573.21,354.28Q573.21,359.10 575.76,359.10Q578.31,359.10 578.31,359.10Q578.31,359.10 580.86,359.10Q583.41,359.10 583.41,359.10Q583.41,359.10 585.96,359.10Q588.52,359.10 588.52,359.10Q588.52,359.10 591.07,359.10Q593.62,359.10 593.62,359.10Q593.62,359.10 596.17,359.10Q598.72,359.10 598.72,359.10Q598.72,359.10 601.27,359.10Q603.83,359.10 603.83,359.10Q603.83,359.10 606.38,359.10Q608.93,359.10 608.93,359.10Q608.93,359.10 611.48,359.10Q614.03,359.10 614.03,359.10Q614.03,359.10 616.58,359.10Q619.13,359.10 619.13,354.28Q619.13,349.45 621.69,349.45Q624.24,349.45 624.24,354.28Q624.24,359.10 626.79,359.10Q629.34,359.10 629.34,359.10Q629.34,359.10 631.89,359.10Q634.44,359.10 634.44,349.81Q634.44,340.53 637.00,340.53Q639.55,340.53 639.55,349.81Q639.55,359.10 642.10,359.10Q644.65,359.10 644.65,359.10Q644.65,359.10 647.20,359.10Q649.75,359.10 649.75,359.10Q649.75,359.10 652.30,359.10Q654.86,359.10 654.86,359.10Q654.86,359.10 657.41,359.10Q659.96,359.10 659.96,359.10Q659.96,359.10 662.51,359.10Q665.06,359.10 665.06,359.10Q665.06,359.10 667.61,359.10Q670.16,359.10 670.16,359.10Q670.16,359.10 672.72,359.10Q675.27,359.10 675.27,359.10Q675.27,359.10 677.82,359.10Q680.37,359.10 680.37,359.10Q680.37,359.10 682.92,359.10Q685.47,359.10 685.47,359.10Q685.47,359.10 688.02,359.10Q690.58,359.10 690.58,354.52Q690.58,349.93 693.13,349.93Q695.68,349.93 695.68,354.52Q695.68,359.10 698.23,359.10Q700.78,359.10 700.78,359.10Q700.78,359.10 703.33,359.10Q705.89,359.10 705.89,359.10Q705.89,359.10 708.44,359.10Q710.99,359.10 710.99,359.10Q710.99,359.10 713.54,359.10Q716.09,359.10 716.09,359.10Q716.09,359.10 718.64,359.10Q721.19,359.10 721.19,359.10Q721.19,359.10 723.75,359.10Q726.30,359.10 726.30,359.10Q726.30,359.10 728.85,359.10Q731.40,359.10 731.40,359.10Q731.40,359.10 733.95,359.10Q736.50,359.10 736.50,359.10Q736.50,359.10 739.06,359.10Q741.61,359.10 741.61,359.10Q741.61,359.10 744.16,359.10Q746.71,359.10 746.71,359.10Q746.71,359.10 749.26,359.10Q751.81,359.10 751.81,359.10Q751.81,359.10 754.36,359.10Q756.92,359.10 756.92,359.10Q756.92,359.10 759.47,359.10L759.47,359.10 L305.30,359.10Z" fill="url(#ga)" stroke="none"/><path d="M305.30,359.10Q307.85,359.10 307.85,359.10Q307.85,359.10 310.40,359.10Q312.95,359.10 312.95,359.10Q312.95,359.10 315.51,359.10Q318.06,359.10 318.06,359.10Q318.06,359.10 320.61,359.10Q323.16,359.10 323.16,359.10Q323.16,359.10 325.71,359.10Q328.26,359.10 328.26,362.72Q328.26,366.34 330.81,366.34Q333.37,366.34 333.37,362.72Q333.37,359.10 335.92,359.10Q338.47,359.10 338.47,359.10Q338.47,359.10 341.02,359.10Q343.57,359.10 343.57,359.10Q343.57,359.10 346.12,359.10Q348.68,359.10 348.68,359.10Q348.68,359.10 351.23,359.10Q353.78,359.10 353.78,359.10Q353.78,359.10 356.33,359.10Q358.88,359.10 358.88,359.10Q358.88,359.10 361.43,359.10Q363.98,359.10 363.98,359.10Q363.98,359.10 366.54,359.10Q369.09,359.10 369.09,359.10Q369.09,359.10 371.64,359.10Q374.19,359.10 374.19,359.10Q374.19,359.10 376.74,359.10Q379.29,359.10 379.29,359.10Q379.29,359.10 381.85,359.10Q384.40,359.10 384.40,359.10Q384.40,359.10 386.95,359.10Q389.50,359.10 389.50,359.10Q389.50,359.10 392.05,359.10Q394.60,359.10 394.60,359.10Q394.60,359.10 397.15,359.10Q399.71,359.10 399.71,359.10Q399.71,359.10 402.26,359.10Q404.81,359.10 404.81,359.10Q404.81,359.10 407.36,359.10Q409.91,359.10 409.91,359.10Q409.91,359.10 412.46,359.10Q415.01,359.10 415.01,359.10Q415.01,359.10 417.57,359.10Q420.12,359.10 420.12,359.10Q420.12,359.10 422.67,359.10Q425.22,359.10 425.22,359.10Q425.22,359.10 427.77,359.10Q430.32,359.10 430.32,359.10Q430.32,359.10 432.88,359.10Q435.43,359.10 435.43,353.91Q435.43,348.73 437.98,348.73Q440.53,348.73 440.53,310.38Q440.53,272.03 443.08,272.03Q445.63,272.03 445.63,315.56Q445.63,359.10 448.18,359.10Q450.74,359.10 450.74,359.10Q450.74,359.10 453.29,359.10Q455.84,359.10 455.84,354.28Q455.84,349.45 458.39,349.45Q460.94,349.45 460.94,354.28Q460.94,359.10 463.49,359.10Q466.04,359.10 466.04,359.10Q466.04,359.10 468.60,359.10Q471.15,359.10 471.15,359.10Q471.15,359.10 473.70,359.10Q476.25,359.10 476.25,359.10Q476.25,359.10 478.80,359.10Q481.35,359.10 481.35,359.10Q481.35,359.10 483.90,359.10Q486.46,359.10 486.46,359.10Q486.46,359.10 489.01,359.10Q491.56,359.10 491.56,359.10Q491.56,359.10 494.11,359.10Q496.66,359.10 496.66,359.10Q496.66,359.10 499.21,359.10Q501.77,359.10 501.77,359.10Q501.77,359.10 504.32,359.10Q506.87,359.10 506.87,359.10Q506.87,359.10 509.42,359.10Q511.97,359.10 511.97,359.10Q511.97,359.10 514.52,359.10Q517.07,359.10 517.07,359.10Q517.07,359.10 519.63,359.10Q522.18,359.10 522.18,359.10Q522.18,359.10 524.73,359.10Q527.28,359.10 527.28,359.10Q527.28,359.10 529.83,359.10Q532.38,359.10 532.38,359.10Q532.38,359.10 534.93,359.10Q537.49,359.10 537.49,359.10Q537.49,359.10 540.04,359.10Q542.59,359.10 542.59,359.10Q542.59,359.10 545.14,359.10Q547.69,359.10 547.69,350.94Q547.69,342.78 550.24,342.78Q552.80,342.78 552.80,350.94Q552.80,359.10 555.35,359.10Q557.90,359.10 557.90,354.52Q557.90,349.93 560.45,349.93Q563.00,349.93 563.00,354.52Q563.00,359.10 565.55,359.10Q568.10,359.10 568.10,354.28Q568.10,349.45 570.66,349.45Q573.21,349.45 573.21,354.28Q573.21,359.10 575.76,359.10Q578.31,359.10 578.31,359.10Q578.31,359.10 580.86,359.10Q583.41,359.10 583.41,359.10Q583.41,359.10 585.96,359.10Q588.52,359.10 588.52,359.10Q588.52,359.10 591.07,359.10Q593.62,359.10 593.62,359.10Q593.62,359.10 596.17,359.10Q598.72,359.10 598.72,359.10Q598.72,359.10 601.27,359.10Q603.83,359.10 603.83,359.10Q603.83,359.10 606.38,359.10Q608.93,359.10 608.93,359.10Q608.93,359.10 611.48,359.10Q614.03,359.10 614.03,359.10Q614.03,359.10 616.58,359.10Q619.13,359.10 619.13,354.28Q619.13,349.45 621.69,349.45Q624.24,349.45 624.24,354.28Q624.24,359.10 626.79,359.10Q629.34,359.10 629.34,359.10Q629.34,359.10 631.89,359.10Q634.44,359.10 634.44,349.81Q634.44,340.53 637.00,340.53Q639.55,340.53 639.55,349.81Q639.55,359.10 642.10,359.10Q644.65,359.10 644.65,359.10Q644.65,359.10 647.20,359.10Q649.75,359.10 649.75,359.10Q649.75,359.10 652.30,359.10Q654.86,359.10 654.86,359.10Q654.86,359.10 657.41,359.10Q659.96,359.10 659.96,359.10Q659.96,359.10 662.51,359.10Q665.06,359.10 665.06,359.10Q665.06,359.10 667.61,359.10Q670.16,359.10 670.16,359.10Q670.16,359.10 672.72,359.10Q675.27,359.10 675.27,359.10Q675.27,359.10 677.82,359.10Q680.37,359.10 680.37,359.10Q680.37,359.10 682.92,359.10Q685.47,359.10 685.47,359.10Q685.47,359.10 688.02,359.10Q690.58,359.10 690.58,354.52Q690.58,349.93 693.13,349.93Q695.68,349.93 695.68,354.52Q695.68,359.10 698.23,359.10Q700.78,359.10 700.78,359.10Q700.78,359.10 703.33,359.10Q705.89,359.10 705.89,359.10Q705.89,359.10 708.44,359.10Q710.99,359.10 710.99,359.10Q710.99,359.10 713.54,359.10Q716.09,359.10 716.09,359.10Q716.09,359.10 718.64,359.10Q721.19,359.10 721.19,359.10Q721.19,359.10 723.75,359.10Q726.30,359.10 726.30,359.10Q726.30,359.10 728.85,359.10Q731.40,359.10 731.40,359.10Q731.40,359.10 733.95,359.10Q736.50,359.10 736.50,359.10Q736.50,359.10 739.06,359.10Q741.61,359.10 741.61,359.10Q741.61,359.10 744.16,359.10Q746.71,359.10 746.71,359.10Q746.71,359.10 749.26,359.10Q751.81,359.10 751.81,359.10Q751.81,359.10 754.36,359.10Q756.92,359.10 756.92,359.10Q756.92,359.10 759.47,359.10" fill="none" stroke="#4b9dcc" stroke-width="1.8" stroke-linejoin="round"/><path d="M382.00,452.30 L393.30,452.30" stroke="#4b9dcc" stroke-width="2.2" stroke-linecap="butt"/><path d="M513.80,452.30 L524.00,452.30" stroke="#9ec0d2" stroke-width="1.6" stroke-dasharray="0.01 4.2" stroke-linecap="round"/><path d="M849.20,208.50 L1315.00,208.50" stroke="#f0f0f0" stroke-width="1"/><path d="M849.20,253.50 L1315.00,253.50" stroke="#f0f0f0" stroke-width="1"/><path d="M849.20,299.50 L1315.00,299.50" stroke="#f0f0f0" stroke-width="1"/><path d="M849.20,344.50 L1315.00,344.50" stroke="#f0f0f0" stroke-width="1"/><path d="M849.20,389.50 L1315.00,389.50" stroke="#f0f0f0" stroke-width="1"/><path d="M849.20,434.50 L1315.00,434.50" stroke="#f0f0f0" stroke-width="1"/><path d="M879.1,435 L879.1,346 Q879.1,344.4 880.7,344.4 L963.4,344.4 Q965,344.4 965,346 L965,435 Z" fill="url(#gb)"/><path d="M966.7,435 L966.7,255.5 Q966.7,253.9 968.3,253.9 L1051.4,253.9 Q1053,253.9 1053,255.5 L1053,435 Z" fill="#97c8e8"/><path d="M1111.7,435 L1111.7,431.4 Q1111.7,429.8 1113.3,429.8 L1196.3,429.8 Q1197.9,429.8 1197.9,431.4 L1197.9,435 Z" fill="#3a9ad6"/><path d="M1400.60,238.50 L1869.00,238.50" stroke="#f0f0f0" stroke-width="1"/><path d="M1400.60,292.50 L1869.00,292.50" stroke="#f0f0f0" stroke-width="1"/><path d="M1400.60,345.50 L1869.00,345.50" stroke="#f0f0f0" stroke-width="1"/><path d="M1400.60,399.50 L1869.00,399.50" stroke="#f0f0f0" stroke-width="1"/><path d="M1401.30,396.52Q1403.93,396.52 1403.93,395.72Q1403.93,394.91 1406.56,394.91Q1409.19,394.91 1409.19,397.06Q1409.19,399.20 1411.83,399.20Q1414.46,399.20 1414.46,398.66Q1414.46,398.13 1417.09,398.13Q1419.72,398.13 1419.72,366.50Q1419.72,334.88 1422.35,334.88Q1424.98,334.88 1424.98,365.70Q1424.98,396.52 1427.62,396.52Q1430.25,396.52 1430.25,384.46Q1430.25,372.40 1432.88,372.40Q1435.51,372.40 1435.51,361.68Q1435.51,350.96 1438.14,350.96Q1440.77,350.96 1440.77,369.72Q1440.77,388.48 1443.40,388.48Q1446.04,388.48 1446.04,376.42Q1446.04,364.36 1448.67,364.36Q1451.30,364.36 1451.30,381.78Q1451.30,399.20 1453.93,399.20Q1456.56,399.20 1456.56,397.86Q1456.56,396.52 1459.19,396.52Q1461.82,396.52 1461.82,391.96Q1461.82,387.41 1464.46,387.41Q1467.09,387.41 1467.09,393.30Q1467.09,399.20 1469.72,399.20Q1472.35,399.20 1472.35,397.86Q1472.35,396.52 1474.98,396.52Q1477.61,396.52 1477.61,388.75Q1477.61,380.98 1480.24,380.98Q1482.88,380.98 1482.88,369.99Q1482.88,359.00 1485.51,359.00Q1488.14,359.00 1488.14,358.20Q1488.14,357.39 1490.77,357.39Q1493.40,357.39 1493.40,360.88Q1493.40,364.36 1496.03,364.36Q1498.67,364.36 1498.67,380.44Q1498.67,396.52 1501.30,396.52Q1503.93,396.52 1503.93,395.72Q1503.93,394.91 1506.56,394.91Q1509.19,394.91 1509.19,395.72Q1509.19,396.52 1511.82,396.52Q1514.45,396.52 1514.45,397.06Q1514.45,397.59 1517.09,397.59Q1519.72,397.59 1519.72,398.40Q1519.72,399.20 1522.35,399.20Q1524.98,399.20 1524.98,389.82Q1524.98,380.44 1527.61,380.44Q1530.24,380.44 1530.24,387.14Q1530.24,393.84 1532.88,393.84Q1535.51,393.84 1535.51,395.18Q1535.51,396.52 1538.14,396.52Q1540.77,396.52 1540.77,397.32Q1540.77,398.13 1543.40,398.13Q1546.03,398.13 1546.03,398.66Q1546.03,399.20 1548.66,399.20Q1551.30,399.20 1551.30,398.40Q1551.30,397.59 1553.93,397.59Q1556.56,397.59 1556.56,397.32Q1556.56,397.06 1559.19,397.06Q1561.82,397.06 1561.82,397.32Q1561.82,397.59 1564.45,397.59Q1567.08,397.59 1567.08,397.59Q1567.08,397.59 1569.72,397.59Q1572.35,397.59 1572.35,397.86Q1572.35,398.13 1574.98,398.13Q1577.61,398.13 1577.61,398.66Q1577.61,399.20 1580.24,399.20Q1582.87,399.20 1582.87,396.52Q1582.87,393.84 1585.50,393.84Q1588.14,393.84 1588.14,395.18Q1588.14,396.52 1590.77,396.52Q1593.40,396.52 1593.40,395.72Q1593.40,394.91 1596.03,394.91Q1598.66,394.91 1598.66,394.38Q1598.66,393.84 1601.29,393.84Q1603.93,393.84 1603.93,395.18Q1603.93,396.52 1606.56,396.52Q1609.19,396.52 1609.19,397.32Q1609.19,398.13 1611.82,398.13Q1614.45,398.13 1614.45,398.66Q1614.45,399.20 1617.08,399.20Q1619.71,399.20 1619.71,396.52Q1619.71,393.84 1622.35,393.84Q1624.98,393.84 1624.98,391.96Q1624.98,390.09 1627.61,390.09Q1630.24,390.09 1630.24,392.50Q1630.24,394.91 1632.87,394.91Q1635.50,394.91 1635.50,396.25Q1635.50,397.59 1638.13,397.59Q1640.77,397.59 1640.77,383.66Q1640.77,369.72 1643.40,369.72Q1646.03,369.72 1646.03,381.78Q1646.03,393.84 1648.66,393.84Q1651.29,393.84 1651.29,393.84Q1651.29,393.84 1653.92,393.84Q1656.56,393.84 1656.56,393.30Q1656.56,392.77 1659.19,392.77Q1661.82,392.77 1661.82,394.64Q1661.82,396.52 1664.45,396.52Q1667.08,396.52 1667.08,395.72Q1667.08,394.91 1669.71,394.91Q1672.34,394.91 1672.34,396.25Q1672.34,397.59 1674.98,397.59Q1677.61,397.59 1677.61,393.04Q1677.61,388.48 1680.24,388.48Q1682.87,388.48 1682.87,393.04Q1682.87,397.59 1685.50,397.59Q1688.13,397.59 1688.13,396.25Q1688.13,394.91 1690.76,394.91Q1693.40,394.91 1693.40,390.36Q1693.40,385.80 1696.03,385.80Q1698.66,385.80 1698.66,380.44Q1698.66,375.08 1701.29,375.08Q1703.92,375.08 1703.92,376.42Q1703.92,377.76 1706.55,377.76Q1709.19,377.76 1709.19,381.78Q1709.19,385.80 1711.82,385.80Q1714.45,385.80 1714.45,385.80Q1714.45,385.80 1717.08,385.80Q1719.71,385.80 1719.71,375.08Q1719.71,364.36 1722.34,364.36Q1724.97,364.36 1724.97,371.06Q1724.97,377.76 1727.61,377.76Q1730.24,377.76 1730.24,375.08Q1730.24,372.40 1732.87,372.40Q1735.50,372.40 1735.50,375.08Q1735.50,377.76 1738.13,377.76Q1740.76,377.76 1740.76,379.10Q1740.76,380.44 1743.39,380.44Q1746.03,380.44 1746.03,375.08Q1746.03,369.72 1748.66,369.72Q1751.29,369.72 1751.29,373.74Q1751.29,377.76 1753.92,377.76Q1756.55,377.76 1756.55,381.78Q1756.55,385.80 1759.18,385.80Q1761.82,385.80 1761.82,385.80Q1761.82,385.80 1764.45,385.80Q1767.08,385.80 1767.08,385.80Q1767.08,385.80 1769.71,385.80Q1772.34,385.80 1772.34,384.46Q1772.34,383.12 1774.97,383.12Q1777.60,383.12 1777.60,383.12Q1777.60,383.12 1780.24,383.12Q1782.87,383.12 1782.87,380.44Q1782.87,377.76 1785.50,377.76Q1788.13,377.76 1788.13,385.80Q1788.13,393.84 1790.76,393.84Q1793.39,393.84 1793.39,393.84Q1793.39,393.84 1796.02,393.84Q1798.66,393.84 1798.66,391.96Q1798.66,390.09 1801.29,390.09Q1803.92,390.09 1803.92,391.96Q1803.92,393.84 1806.55,393.84Q1809.18,393.84 1809.18,394.38Q1809.18,394.91 1811.81,394.91Q1814.45,394.91 1814.45,394.91Q1814.45,394.91 1817.08,394.91Q1819.71,394.91 1819.71,395.72Q1819.71,396.52 1822.34,396.52Q1824.97,396.52 1824.97,396.52Q1824.97,396.52 1827.60,396.52Q1830.23,396.52 1830.23,396.52Q1830.23,396.52 1832.87,396.52Q1835.50,396.52 1835.50,396.52Q1835.50,396.52 1838.13,396.52Q1840.76,396.52 1840.76,395.72Q1840.76,394.91 1843.39,394.91Q1846.02,394.91 1846.02,391.70Q1846.02,388.48 1848.65,388.48Q1851.29,388.48 1851.29,391.16Q1851.29,393.84 1853.92,393.84Q1856.55,393.84 1856.55,394.38Q1856.55,394.91 1859.18,394.91Q1861.81,394.91 1861.81,395.72Q1861.81,396.52 1864.44,396.52Q1867.08,396.52 1867.08,395.18Q1867.08,393.84 1869.71,393.84" fill="none" stroke="#82a8bf" stroke-width="1.8" stroke-dasharray="0.01 3.6" stroke-linecap="round"/><path d="M1401.30,394.38Q1403.93,394.38 1403.93,396.25Q1403.93,398.13 1406.56,398.13Q1409.19,398.13 1409.19,398.40Q1409.19,398.66 1411.83,398.66Q1414.46,398.66 1414.46,398.26Q1414.46,397.86 1417.09,397.86Q1419.72,397.86 1419.72,396.92Q1419.72,395.98 1422.35,395.98Q1424.98,395.98 1424.98,394.91Q1424.98,393.84 1427.62,393.84Q1430.25,393.84 1430.25,394.91Q1430.25,395.98 1432.88,395.98Q1435.51,395.98 1435.51,395.72Q1435.51,395.45 1438.14,395.45Q1440.77,395.45 1440.77,395.18Q1440.77,394.91 1443.40,394.91Q1446.04,394.91 1446.04,394.11Q1446.04,393.30 1448.67,393.30Q1451.30,393.30 1451.30,394.91Q1451.30,396.52 1453.93,396.52Q1456.56,396.52 1456.56,396.25Q1456.56,395.98 1459.19,395.98Q1461.82,395.98 1461.82,396.52Q1461.82,397.06 1464.46,397.06Q1467.09,397.06 1467.09,397.46Q1467.09,397.86 1469.72,397.86Q1472.35,397.86 1472.35,397.59Q1472.35,397.32 1474.98,397.32Q1477.61,397.32 1477.61,393.28Q1477.61,389.23 1480.24,389.23Q1482.88,389.23 1482.88,392.88Q1482.88,396.52 1485.51,396.52Q1488.14,396.52 1488.14,396.52Q1488.14,396.52 1490.77,396.52Q1493.40,396.52 1493.40,396.79Q1493.40,397.06 1496.03,397.06Q1498.67,397.06 1498.67,395.98Q1498.67,394.91 1501.30,394.91Q1503.93,394.91 1503.93,394.11Q1503.93,393.30 1506.56,393.30Q1509.19,393.30 1509.19,393.84Q1509.19,394.38 1511.82,394.38Q1514.45,394.38 1514.45,394.91Q1514.45,395.45 1517.09,395.45Q1519.72,395.45 1519.72,395.72Q1519.72,395.98 1522.35,395.98Q1524.98,395.98 1524.98,394.91Q1524.98,393.84 1527.61,393.84Q1530.24,393.84 1530.24,393.57Q1530.24,393.30 1532.88,393.30Q1535.51,393.30 1535.51,393.57Q1535.51,393.84 1538.14,393.84Q1540.77,393.84 1540.77,392.90Q1540.77,391.96 1543.40,391.96Q1546.03,391.96 1546.03,393.71Q1546.03,395.45 1548.66,395.45Q1551.30,395.45 1551.30,395.18Q1551.30,394.91 1553.93,394.91Q1556.56,394.91 1556.56,393.57Q1556.56,392.23 1559.19,392.23Q1561.82,392.23 1561.82,390.89Q1561.82,389.55 1564.45,389.55Q1567.08,389.55 1567.08,392.23Q1567.08,394.91 1569.72,394.91Q1572.35,394.91 1572.35,395.45Q1572.35,395.98 1574.98,395.98Q1577.61,395.98 1577.61,394.64Q1577.61,393.30 1580.24,393.30Q1582.87,393.30 1582.87,393.57Q1582.87,393.84 1585.50,393.84Q1588.14,393.84 1588.14,393.46Q1588.14,393.09 1590.77,393.09Q1593.40,393.09 1593.40,393.20Q1593.40,393.30 1596.03,393.30Q1598.66,393.30 1598.66,396.25Q1598.66,399.20 1601.29,399.20Q1603.93,399.20 1603.93,392.77Q1603.93,386.34 1606.56,386.34Q1609.19,386.34 1609.19,371.33Q1609.19,356.32 1611.82,356.32Q1614.45,356.32 1614.45,348.28Q1614.45,340.24 1617.08,340.24Q1619.71,340.24 1619.71,349.08Q1619.71,357.93 1622.35,357.93Q1624.98,357.93 1624.98,340.51Q1624.98,323.09 1627.61,323.09Q1630.24,323.09 1630.24,330.59Q1630.24,338.10 1632.87,338.10Q1635.50,338.10 1635.50,337.83Q1635.50,337.56 1638.13,337.56Q1640.77,337.56 1640.77,326.84Q1640.77,316.12 1643.40,316.12Q1646.03,316.12 1646.03,326.04Q1646.03,335.95 1648.66,335.95Q1651.29,335.95 1651.29,332.20Q1651.29,328.45 1653.92,328.45Q1656.56,328.45 1656.56,322.28Q1656.56,316.12 1659.19,316.12Q1661.82,316.12 1661.82,349.08Q1661.82,382.05 1664.45,382.05Q1667.08,382.05 1667.08,338.36Q1667.08,294.68 1669.71,294.68Q1672.34,294.68 1672.34,298.70Q1672.34,302.72 1674.98,302.72Q1677.61,302.72 1677.61,303.52Q1677.61,304.33 1680.24,304.33Q1682.87,304.33 1682.87,334.61Q1682.87,364.90 1685.50,364.90Q1688.13,364.90 1688.13,365.70Q1688.13,366.50 1690.76,366.50Q1693.40,366.50 1693.40,372.40Q1693.40,378.30 1696.03,378.30Q1698.66,378.30 1698.66,353.37Q1698.66,328.45 1701.29,328.45Q1703.92,328.45 1703.92,337.02Q1703.92,345.60 1706.55,345.60Q1709.19,345.60 1709.19,340.78Q1709.19,335.95 1711.82,335.95Q1714.45,335.95 1714.45,337.02Q1714.45,338.10 1717.08,338.10Q1719.71,338.10 1719.71,341.85Q1719.71,345.60 1722.34,345.60Q1724.97,345.60 1724.97,340.78Q1724.97,335.95 1727.61,335.95Q1730.24,335.95 1730.24,351.76Q1730.24,367.58 1732.87,367.58Q1735.50,367.58 1735.50,342.65Q1735.50,317.73 1738.13,317.73Q1740.76,317.73 1740.76,340.24Q1740.76,362.75 1743.39,362.75Q1746.03,362.75 1746.03,356.05Q1746.03,349.35 1748.66,349.35Q1751.29,349.35 1751.29,335.15Q1751.29,320.94 1753.92,320.94Q1756.55,320.94 1756.55,324.16Q1756.55,327.38 1759.18,327.38Q1761.82,327.38 1761.82,325.50Q1761.82,323.62 1764.45,323.62Q1767.08,323.62 1767.08,317.46Q1767.08,311.30 1769.71,311.30Q1772.34,311.30 1772.34,347.48Q1772.34,383.66 1774.97,383.66Q1777.60,383.66 1777.60,364.09Q1777.60,344.53 1780.24,344.53Q1782.87,344.53 1782.87,355.52Q1782.87,366.50 1785.50,366.50Q1788.13,366.50 1788.13,365.97Q1788.13,365.43 1790.76,365.43Q1793.39,365.43 1793.39,365.16Q1793.39,364.90 1796.02,364.90Q1798.66,364.90 1798.66,352.30Q1798.66,339.70 1801.29,339.70Q1803.92,339.70 1803.92,348.01Q1803.92,356.32 1806.55,356.32Q1809.18,356.32 1809.18,333.27Q1809.18,310.22 1811.81,310.22Q1814.45,310.22 1814.45,332.74Q1814.45,355.25 1817.08,355.25Q1819.71,355.25 1819.71,353.91Q1819.71,352.57 1822.34,352.57Q1824.97,352.57 1824.97,344.80Q1824.97,337.02 1827.60,337.02Q1830.23,337.02 1830.23,334.08Q1830.23,331.13 1832.87,331.13Q1835.50,331.13 1835.50,328.45Q1835.50,325.77 1838.13,325.77Q1840.76,325.77 1840.76,320.94Q1840.76,316.12 1843.39,316.12Q1846.02,316.12 1846.02,288.25Q1846.02,260.38 1848.65,260.38Q1851.29,260.38 1851.29,286.64Q1851.29,312.90 1853.92,312.90Q1856.55,312.90 1856.55,293.88Q1856.55,274.85 1859.18,274.85Q1861.81,274.85 1861.81,294.95Q1861.81,315.05 1864.44,315.05Q1867.08,315.05 1867.08,286.37Q1867.08,257.70 1869.71,257.70L1869.71,399.20 L1401.30,399.20Z" fill="url(#ga)" stroke="none"/><path d="M1401.30,394.38Q1403.93,394.38 1403.93,396.25Q1403.93,398.13 1406.56,398.13Q1409.19,398.13 1409.19,398.40Q1409.19,398.66 1411.83,398.66Q1414.46,398.66 1414.46,398.26Q1414.46,397.86 1417.09,397.86Q1419.72,397.86 1419.72,396.92Q1419.72,395.98 1422.35,395.98Q1424.98,395.98 1424.98,394.91Q1424.98,393.84 1427.62,393.84Q1430.25,393.84 1430.25,394.91Q1430.25,395.98 1432.88,395.98Q1435.51,395.98 1435.51,395.72Q1435.51,395.45 1438.14,395.45Q1440.77,395.45 1440.77,395.18Q1440.77,394.91 1443.40,394.91Q1446.04,394.91 1446.04,394.11Q1446.04,393.30 1448.67,393.30Q1451.30,393.30 1451.30,394.91Q1451.30,396.52 1453.93,396.52Q1456.56,396.52 1456.56,396.25Q1456.56,395.98 1459.19,395.98Q1461.82,395.98 1461.82,396.52Q1461.82,397.06 1464.46,397.06Q1467.09,397.06 1467.09,397.46Q1467.09,397.86 1469.72,397.86Q1472.35,397.86 1472.35,397.59Q1472.35,397.32 1474.98,397.32Q1477.61,397.32 1477.61,393.28Q1477.61,389.23 1480.24,389.23Q1482.88,389.23 1482.88,392.88Q1482.88,396.52 1485.51,396.52Q1488.14,396.52 1488.14,396.52Q1488.14,396.52 1490.77,396.52Q1493.40,396.52 1493.40,396.79Q1493.40,397.06 1496.03,397.06Q1498.67,397.06 1498.67,395.98Q1498.67,394.91 1501.30,394.91Q1503.93,394.91 1503.93,394.11Q1503.93,393.30 1506.56,393.30Q1509.19,393.30 1509.19,393.84Q1509.19,394.38 1511.82,394.38Q1514.45,394.38 1514.45,394.91Q1514.45,395.45 1517.09,395.45Q1519.72,395.45 1519.72,395.72Q1519.72,395.98 1522.35,395.98Q1524.98,395.98 1524.98,394.91Q1524.98,393.84 1527.61,393.84Q1530.24,393.84 1530.24,393.57Q1530.24,393.30 1532.88,393.30Q1535.51,393.30 1535.51,393.57Q1535.51,393.84 1538.14,393.84Q1540.77,393.84 1540.77,392.90Q1540.77,391.96 1543.40,391.96Q1546.03,391.96 1546.03,393.71Q1546.03,395.45 1548.66,395.45Q1551.30,395.45 1551.30,395.18Q1551.30,394.91 1553.93,394.91Q1556.56,394.91 1556.56,393.57Q1556.56,392.23 1559.19,392.23Q1561.82,392.23 1561.82,390.89Q1561.82,389.55 1564.45,389.55Q1567.08,389.55 1567.08,392.23Q1567.08,394.91 1569.72,394.91Q1572.35,394.91 1572.35,395.45Q1572.35,395.98 1574.98,395.98Q1577.61,395.98 1577.61,394.64Q1577.61,393.30 1580.24,393.30Q1582.87,393.30 1582.87,393.57Q1582.87,393.84 1585.50,393.84Q1588.14,393.84 1588.14,393.46Q1588.14,393.09 1590.77,393.09Q1593.40,393.09 1593.40,393.20Q1593.40,393.30 1596.03,393.30Q1598.66,393.30 1598.66,396.25Q1598.66,399.20 1601.29,399.20Q1603.93,399.20 1603.93,392.77Q1603.93,386.34 1606.56,386.34Q1609.19,386.34 1609.19,371.33Q1609.19,356.32 1611.82,356.32Q1614.45,356.32 1614.45,348.28Q1614.45,340.24 1617.08,340.24Q1619.71,340.24 1619.71,349.08Q1619.71,357.93 1622.35,357.93Q1624.98,357.93 1624.98,340.51Q1624.98,323.09 1627.61,323.09Q1630.24,323.09 1630.24,330.59Q1630.24,338.10 1632.87,338.10Q1635.50,338.10 1635.50,337.83Q1635.50,337.56 1638.13,337.56Q1640.77,337.56 1640.77,326.84Q1640.77,316.12 1643.40,316.12Q1646.03,316.12 1646.03,326.04Q1646.03,335.95 1648.66,335.95Q1651.29,335.95 1651.29,332.20Q1651.29,328.45 1653.92,328.45Q1656.56,328.45 1656.56,322.28Q1656.56,316.12 1659.19,316.12Q1661.82,316.12 1661.82,349.08Q1661.82,382.05 1664.45,382.05Q1667.08,382.05 1667.08,338.36Q1667.08,294.68 1669.71,294.68Q1672.34,294.68 1672.34,298.70Q1672.34,302.72 1674.98,302.72Q1677.61,302.72 1677.61,303.52Q1677.61,304.33 1680.24,304.33Q1682.87,304.33 1682.87,334.61Q1682.87,364.90 1685.50,364.90Q1688.13,364.90 1688.13,365.70Q1688.13,366.50 1690.76,366.50Q1693.40,366.50 1693.40,372.40Q1693.40,378.30 1696.03,378.30Q1698.66,378.30 1698.66,353.37Q1698.66,328.45 1701.29,328.45Q1703.92,328.45 1703.92,337.02Q1703.92,345.60 1706.55,345.60Q1709.19,345.60 1709.19,340.78Q1709.19,335.95 1711.82,335.95Q1714.45,335.95 1714.45,337.02Q1714.45,338.10 1717.08,338.10Q1719.71,338.10 1719.71,341.85Q1719.71,345.60 1722.34,345.60Q1724.97,345.60 1724.97,340.78Q1724.97,335.95 1727.61,335.95Q1730.24,335.95 1730.24,351.76Q1730.24,367.58 1732.87,367.58Q1735.50,367.58 1735.50,342.65Q1735.50,317.73 1738.13,317.73Q1740.76,317.73 1740.76,340.24Q1740.76,362.75 1743.39,362.75Q1746.03,362.75 1746.03,356.05Q1746.03,349.35 1748.66,349.35Q1751.29,349.35 1751.29,335.15Q1751.29,320.94 1753.92,320.94Q1756.55,320.94 1756.55,324.16Q1756.55,327.38 1759.18,327.38Q1761.82,327.38 1761.82,325.50Q1761.82,323.62 1764.45,323.62Q1767.08,323.62 1767.08,317.46Q1767.08,311.30 1769.71,311.30Q1772.34,311.30 1772.34,347.48Q1772.34,383.66 1774.97,383.66Q1777.60,383.66 1777.60,364.09Q1777.60,344.53 1780.24,344.53Q1782.87,344.53 1782.87,355.52Q1782.87,366.50 1785.50,366.50Q1788.13,366.50 1788.13,365.97Q1788.13,365.43 1790.76,365.43Q1793.39,365.43 1793.39,365.16Q1793.39,364.90 1796.02,364.90Q1798.66,364.90 1798.66,352.30Q1798.66,339.70 1801.29,339.70Q1803.92,339.70 1803.92,348.01Q1803.92,356.32 1806.55,356.32Q1809.18,356.32 1809.18,333.27Q1809.18,310.22 1811.81,310.22Q1814.45,310.22 1814.45,332.74Q1814.45,355.25 1817.08,355.25Q1819.71,355.25 1819.71,353.91Q1819.71,352.57 1822.34,352.57Q1824.97,352.57 1824.97,344.80Q1824.97,337.02 1827.60,337.02Q1830.23,337.02 1830.23,334.08Q1830.23,331.13 1832.87,331.13Q1835.50,331.13 1835.50,328.45Q1835.50,325.77 1838.13,325.77Q1840.76,325.77 1840.76,320.94Q1840.76,316.12 1843.39,316.12Q1846.02,316.12 1846.02,288.25Q1846.02,260.38 1848.65,260.38Q1851.29,260.38 1851.29,286.64Q1851.29,312.90 1853.92,312.90Q1856.55,312.90 1856.55,293.88Q1856.55,274.85 1859.18,274.85Q1861.81,274.85 1861.81,294.95Q1861.81,315.05 1864.44,315.05Q1867.08,315.05 1867.08,286.37Q1867.08,257.70 1869.71,257.70" fill="none" stroke="#4b9dcc" stroke-width="1.8" stroke-linejoin="round"/><path d="M1491.20,452.30 L1502.50,452.30" stroke="#4b9dcc" stroke-width="2.2" stroke-linecap="butt"/><path d="M1623.10,452.30 L1633.30,452.30" stroke="#9ec0d2" stroke-width="1.6" stroke-dasharray="0.01 4.2" stroke-linecap="round"/><path d="M835.50,571.50 L1314.40,571.50" stroke="#f0f0f0" stroke-width="1"/><path d="M835.50,611.50 L1314.40,611.50" stroke="#f0f0f0" stroke-width="1"/><path d="M835.50,651.50 L1314.40,651.50" stroke="#f0f0f0" stroke-width="1"/><path d="M835.50,692.50 L1314.40,692.50" stroke="#f0f0f0" stroke-width="1"/><path d="M835.50,732.50 L1314.40,732.50" stroke="#f0f0f0" stroke-width="1"/><path d="M835.10,732.30Q837.80,732.30 837.80,732.30Q837.80,732.30 840.49,732.30Q843.18,732.30 843.18,732.30Q843.18,732.30 845.88,732.30Q848.58,732.30 848.58,732.30Q848.58,732.30 851.27,732.30Q853.96,732.30 853.96,732.30Q853.96,732.30 856.66,732.30Q859.36,732.30 859.36,732.30Q859.36,732.30 862.05,732.30Q864.75,732.30 864.75,732.30Q864.75,732.30 867.44,732.30Q870.13,732.30 870.13,732.30Q870.13,732.30 872.83,732.30Q875.53,732.30 875.53,712.15Q875.53,692.00 878.22,692.00Q880.91,692.00 880.91,651.70Q880.91,611.40 883.61,611.40Q886.31,611.40 886.31,611.40Q886.31,611.40 889.00,611.40Q891.69,611.40 891.69,651.70Q891.69,692.00 894.39,692.00Q897.09,692.00 897.09,692.00Q897.09,692.00 899.78,692.00Q902.48,692.00 902.48,651.70Q902.48,611.40 905.17,611.40Q907.87,611.40 907.87,591.25Q907.87,571.10 910.56,571.10Q913.26,571.10 913.26,651.70Q913.26,732.30 915.95,732.30Q918.64,732.30 918.64,732.30Q918.64,732.30 921.34,732.30Q924.04,732.30 924.04,732.30Q924.04,732.30 926.73,732.30Q929.42,732.30 929.42,732.30Q929.42,732.30 932.12,732.30Q934.82,732.30 934.82,732.30Q934.82,732.30 937.51,732.30Q940.20,732.30 940.20,732.30Q940.20,732.30 942.90,732.30Q945.60,732.30 945.60,732.30Q945.60,732.30 948.29,732.30Q950.99,732.30 950.99,732.30Q950.99,732.30 953.68,732.30Q956.38,732.30 956.38,732.30Q956.38,732.30 959.07,732.30Q961.77,732.30 961.77,732.30Q961.77,732.30 964.46,732.30Q967.15,732.30 967.15,732.30Q967.15,732.30 969.85,732.30Q972.55,732.30 972.55,732.30Q972.55,732.30 975.24,732.30Q977.93,732.30 977.93,732.30Q977.93,732.30 980.63,732.30Q983.33,732.30 983.33,732.30Q983.33,732.30 986.02,732.30Q988.72,732.30 988.72,732.30Q988.72,732.30 991.41,732.30Q994.11,732.30 994.11,732.30Q994.11,732.30 996.80,732.30Q999.50,732.30 999.50,732.30Q999.50,732.30 1002.19,732.30Q1004.88,732.30 1004.88,732.30Q1004.88,732.30 1007.58,732.30Q1010.28,732.30 1010.28,732.30Q1010.28,732.30 1012.97,732.30Q1015.66,732.30 1015.66,732.30Q1015.66,732.30 1018.36,732.30Q1021.06,732.30 1021.06,732.30Q1021.06,732.30 1023.75,732.30Q1026.45,732.30 1026.45,712.15Q1026.45,692.00 1029.14,692.00Q1031.84,692.00 1031.84,712.15Q1031.84,732.30 1034.53,732.30Q1037.22,732.30 1037.22,732.30Q1037.22,732.30 1039.92,732.30Q1042.62,732.30 1042.62,712.15Q1042.62,692.00 1045.31,692.00Q1048.01,692.00 1048.01,712.15Q1048.01,732.30 1050.70,732.30Q1053.39,732.30 1053.39,732.30Q1053.39,732.30 1056.09,732.30Q1058.78,732.30 1058.78,712.15Q1058.78,692.00 1061.48,692.00Q1064.17,692.00 1064.17,712.15Q1064.17,732.30 1066.87,732.30Q1069.57,732.30 1069.57,732.30Q1069.57,732.30 1072.26,732.30Q1074.95,732.30 1074.95,732.30Q1074.95,732.30 1077.65,732.30Q1080.35,732.30 1080.35,712.15Q1080.35,692.00 1083.04,692.00Q1085.74,692.00 1085.74,712.15Q1085.74,732.30 1088.43,732.30Q1091.12,732.30 1091.12,732.30Q1091.12,732.30 1093.82,732.30Q1096.51,732.30 1096.51,732.30Q1096.51,732.30 1099.21,732.30Q1101.90,732.30 1101.90,732.30Q1101.90,732.30 1104.60,732.30Q1107.30,732.30 1107.30,732.30Q1107.30,732.30 1109.99,732.30Q1112.68,732.30 1112.68,732.30Q1112.68,732.30 1115.38,732.30Q1118.08,732.30 1118.08,692.00Q1118.08,651.70 1120.77,651.70Q1123.47,651.70 1123.47,692.00Q1123.47,732.30 1126.16,732.30Q1128.86,732.30 1128.86,732.30Q1128.86,732.30 1131.55,732.30Q1134.24,732.30 1134.24,692.00Q1134.24,651.70 1136.94,651.70Q1139.63,651.70 1139.63,692.00Q1139.63,732.30 1142.33,732.30Q1145.03,732.30 1145.03,732.30Q1145.03,732.30 1147.72,732.30Q1150.41,732.30 1150.41,732.30Q1150.41,732.30 1153.11,732.30Q1155.81,732.30 1155.81,732.30Q1155.81,732.30 1158.50,732.30Q1161.19,732.30 1161.19,712.15Q1161.19,692.00 1163.89,692.00Q1166.59,692.00 1166.59,712.15Q1166.59,732.30 1169.28,732.30Q1171.97,732.30 1171.97,732.30Q1171.97,732.30 1174.67,732.30Q1177.37,732.30 1177.37,732.30Q1177.37,732.30 1180.06,732.30Q1182.76,732.30 1182.76,732.30Q1182.76,732.30 1185.45,732.30Q1188.14,732.30 1188.14,732.30Q1188.14,732.30 1190.84,732.30Q1193.53,732.30 1193.53,732.30Q1193.53,732.30 1196.23,732.30Q1198.92,732.30 1198.92,732.30Q1198.92,732.30 1201.62,732.30Q1204.32,732.30 1204.32,732.30Q1204.32,732.30 1207.01,732.30Q1209.70,732.30 1209.70,732.30Q1209.70,732.30 1212.40,732.30Q1215.10,732.30 1215.10,732.30Q1215.10,732.30 1217.79,732.30Q1220.49,732.30 1220.49,732.30Q1220.49,732.30 1223.18,732.30Q1225.88,732.30 1225.88,732.30Q1225.88,732.30 1228.57,732.30Q1231.26,732.30 1231.26,732.30Q1231.26,732.30 1233.96,732.30Q1236.65,732.30 1236.65,732.30Q1236.65,732.30 1239.35,732.30Q1242.05,732.30 1242.05,732.30Q1242.05,732.30 1244.74,732.30Q1247.43,732.30 1247.43,732.30Q1247.43,732.30 1250.13,732.30Q1252.83,732.30 1252.83,732.30Q1252.83,732.30 1255.52,732.30Q1258.22,732.30 1258.22,732.30Q1258.22,732.30 1260.91,732.30Q1263.61,732.30 1263.61,732.30Q1263.61,732.30 1266.30,732.30Q1268.99,732.30 1268.99,732.30Q1268.99,732.30 1271.69,732.30Q1274.38,732.30 1274.38,732.30Q1274.38,732.30 1277.08,732.30Q1279.78,732.30 1279.78,732.30Q1279.78,732.30 1282.47,732.30Q1285.16,732.30 1285.16,732.30Q1285.16,732.30 1287.86,732.30Q1290.56,732.30 1290.56,692.00Q1290.56,651.70 1293.25,651.70Q1295.94,651.70 1295.94,671.85Q1295.94,692.00 1298.64,692.00Q1301.34,692.00 1301.34,712.15Q1301.34,732.30 1304.03,732.30Q1306.72,732.30 1306.72,732.30Q1306.72,732.30 1309.42,732.30Q1312.12,732.30 1312.12,732.30Q1312.12,732.30 1314.81,732.30" fill="none" stroke="#82a8bf" stroke-width="1.8" stroke-dasharray="0.01 3.6" stroke-linecap="round"/><path d="M835.10,732.30Q837.80,732.30 837.80,732.30Q837.80,732.30 840.49,732.30Q843.18,732.30 843.18,732.30Q843.18,732.30 845.88,732.30Q848.58,732.30 848.58,732.30Q848.58,732.30 851.27,732.30Q853.96,732.30 853.96,732.30Q853.96,732.30 856.66,732.30Q859.36,732.30 859.36,732.30Q859.36,732.30 862.05,732.30Q864.75,732.30 864.75,732.30Q864.75,732.30 867.44,732.30Q870.13,732.30 870.13,732.30Q870.13,732.30 872.83,732.30Q875.53,732.30 875.53,732.30Q875.53,732.30 878.22,732.30Q880.91,732.30 880.91,732.30Q880.91,732.30 883.61,732.30Q886.31,732.30 886.31,732.30Q886.31,732.30 889.00,732.30Q891.69,732.30 891.69,732.30Q891.69,732.30 894.39,732.30Q897.09,732.30 897.09,732.30Q897.09,732.30 899.78,732.30Q902.48,732.30 902.48,732.30Q902.48,732.30 905.17,732.30Q907.87,732.30 907.87,732.30Q907.87,732.30 910.56,732.30Q913.26,732.30 913.26,732.30Q913.26,732.30 915.95,732.30Q918.64,732.30 918.64,732.30Q918.64,732.30 921.34,732.30Q924.04,732.30 924.04,732.30Q924.04,732.30 926.73,732.30Q929.42,732.30 929.42,732.30Q929.42,732.30 932.12,732.30Q934.82,732.30 934.82,732.30Q934.82,732.30 937.51,732.30Q940.20,732.30 940.20,732.30Q940.20,732.30 942.90,732.30Q945.60,732.30 945.60,732.30Q945.60,732.30 948.29,732.30Q950.99,732.30 950.99,732.30Q950.99,732.30 953.68,732.30Q956.38,732.30 956.38,732.30Q956.38,732.30 959.07,732.30Q961.77,732.30 961.77,732.30Q961.77,732.30 964.46,732.30Q967.15,732.30 967.15,732.30Q967.15,732.30 969.85,732.30Q972.55,732.30 972.55,712.15Q972.55,692.00 975.24,692.00Q977.93,692.00 977.93,692.00Q977.93,692.00 980.63,692.00Q983.33,692.00 983.33,712.15Q983.33,732.30 986.02,732.30Q988.72,732.30 988.72,732.30Q988.72,732.30 991.41,732.30Q994.11,732.30 994.11,712.15Q994.11,692.00 996.80,692.00Q999.50,692.00 999.50,712.15Q999.50,732.30 1002.19,732.30Q1004.88,732.30 1004.88,732.30Q1004.88,732.30 1007.58,732.30Q1010.28,732.30 1010.28,732.30Q1010.28,732.30 1012.97,732.30Q1015.66,732.30 1015.66,732.30Q1015.66,732.30 1018.36,732.30Q1021.06,732.30 1021.06,732.30Q1021.06,732.30 1023.75,732.30Q1026.45,732.30 1026.45,732.30Q1026.45,732.30 1029.14,732.30Q1031.84,732.30 1031.84,732.30Q1031.84,732.30 1034.53,732.30Q1037.22,732.30 1037.22,732.30Q1037.22,732.30 1039.92,732.30Q1042.62,732.30 1042.62,732.30Q1042.62,732.30 1045.31,732.30Q1048.01,732.30 1048.01,732.30Q1048.01,732.30 1050.70,732.30Q1053.39,732.30 1053.39,732.30Q1053.39,732.30 1056.09,732.30Q1058.78,732.30 1058.78,732.30Q1058.78,732.30 1061.48,732.30Q1064.17,732.30 1064.17,732.30Q1064.17,732.30 1066.87,732.30Q1069.57,732.30 1069.57,732.30Q1069.57,732.30 1072.26,732.30Q1074.95,732.30 1074.95,732.30Q1074.95,732.30 1077.65,732.30Q1080.35,732.30 1080.35,732.30Q1080.35,732.30 1083.04,732.30Q1085.74,732.30 1085.74,732.30Q1085.74,732.30 1088.43,732.30Q1091.12,732.30 1091.12,712.15Q1091.12,692.00 1093.82,692.00Q1096.51,692.00 1096.51,712.15Q1096.51,732.30 1099.21,732.30Q1101.90,732.30 1101.90,712.15Q1101.90,692.00 1104.60,692.00Q1107.30,692.00 1107.30,712.15Q1107.30,732.30 1109.99,732.30Q1112.68,732.30 1112.68,712.15Q1112.68,692.00 1115.38,692.00Q1118.08,692.00 1118.08,712.15Q1118.08,732.30 1120.77,732.30Q1123.47,732.30 1123.47,732.30Q1123.47,732.30 1126.16,732.30Q1128.86,732.30 1128.86,732.30Q1128.86,732.30 1131.55,732.30Q1134.24,732.30 1134.24,732.30Q1134.24,732.30 1136.94,732.30Q1139.63,732.30 1139.63,732.30Q1139.63,732.30 1142.33,732.30Q1145.03,732.30 1145.03,732.30Q1145.03,732.30 1147.72,732.30Q1150.41,732.30 1150.41,732.30Q1150.41,732.30 1153.11,732.30Q1155.81,732.30 1155.81,732.30Q1155.81,732.30 1158.50,732.30Q1161.19,732.30 1161.19,732.30Q1161.19,732.30 1163.89,732.30Q1166.59,732.30 1166.59,712.15Q1166.59,692.00 1169.28,692.00Q1171.97,692.00 1171.97,712.15Q1171.97,732.30 1174.67,732.30Q1177.37,732.30 1177.37,732.30Q1177.37,732.30 1180.06,732.30Q1182.76,732.30 1182.76,712.15Q1182.76,692.00 1185.45,692.00Q1188.14,692.00 1188.14,712.15Q1188.14,732.30 1190.84,732.30Q1193.53,732.30 1193.53,732.30Q1193.53,732.30 1196.23,732.30Q1198.92,732.30 1198.92,732.30Q1198.92,732.30 1201.62,732.30Q1204.32,732.30 1204.32,732.30Q1204.32,732.30 1207.01,732.30Q1209.70,732.30 1209.70,732.30Q1209.70,732.30 1212.40,732.30Q1215.10,732.30 1215.10,732.30Q1215.10,732.30 1217.79,732.30Q1220.49,732.30 1220.49,732.30Q1220.49,732.30 1223.18,732.30Q1225.88,732.30 1225.88,732.30Q1225.88,732.30 1228.57,732.30Q1231.26,732.30 1231.26,732.30Q1231.26,732.30 1233.96,732.30Q1236.65,732.30 1236.65,732.30Q1236.65,732.30 1239.35,732.30Q1242.05,732.30 1242.05,712.15Q1242.05,692.00 1244.74,692.00Q1247.43,692.00 1247.43,712.15Q1247.43,732.30 1250.13,732.30Q1252.83,732.30 1252.83,732.30Q1252.83,732.30 1255.52,732.30Q1258.22,732.30 1258.22,732.30Q1258.22,732.30 1260.91,732.30Q1263.61,732.30 1263.61,732.30Q1263.61,732.30 1266.30,732.30Q1268.99,732.30 1268.99,732.30Q1268.99,732.30 1271.69,732.30Q1274.38,732.30 1274.38,732.30Q1274.38,732.30 1277.08,732.30Q1279.78,732.30 1279.78,732.30Q1279.78,732.30 1282.47,732.30Q1285.16,732.30 1285.16,732.30Q1285.16,732.30 1287.86,732.30Q1290.56,732.30 1290.56,732.30Q1290.56,732.30 1293.25,732.30Q1295.94,732.30 1295.94,732.30Q1295.94,732.30 1298.64,732.30Q1301.34,732.30 1301.34,732.30Q1301.34,732.30 1304.03,732.30Q1306.72,732.30 1306.72,732.30Q1306.72,732.30 1309.42,732.30Q1312.12,732.30 1312.12,732.30Q1312.12,732.30 1314.81,732.30L1314.81,732.30 L835.10,732.30Z" fill="url(#ga)" stroke="none"/><path d="M835.10,732.30Q837.80,732.30 837.80,732.30Q837.80,732.30 840.49,732.30Q843.18,732.30 843.18,732.30Q843.18,732.30 845.88,732.30Q848.58,732.30 848.58,732.30Q848.58,732.30 851.27,732.30Q853.96,732.30 853.96,732.30Q853.96,732.30 856.66,732.30Q859.36,732.30 859.36,732.30Q859.36,732.30 862.05,732.30Q864.75,732.30 864.75,732.30Q864.75,732.30 867.44,732.30Q870.13,732.30 870.13,732.30Q870.13,732.30 872.83,732.30Q875.53,732.30 875.53,732.30Q875.53,732.30 878.22,732.30Q880.91,732.30 880.91,732.30Q880.91,732.30 883.61,732.30Q886.31,732.30 886.31,732.30Q886.31,732.30 889.00,732.30Q891.69,732.30 891.69,732.30Q891.69,732.30 894.39,732.30Q897.09,732.30 897.09,732.30Q897.09,732.30 899.78,732.30Q902.48,732.30 902.48,732.30Q902.48,732.30 905.17,732.30Q907.87,732.30 907.87,732.30Q907.87,732.30 910.56,732.30Q913.26,732.30 913.26,732.30Q913.26,732.30 915.95,732.30Q918.64,732.30 918.64,732.30Q918.64,732.30 921.34,732.30Q924.04,732.30 924.04,732.30Q924.04,732.30 926.73,732.30Q929.42,732.30 929.42,732.30Q929.42,732.30 932.12,732.30Q934.82,732.30 934.82,732.30Q934.82,732.30 937.51,732.30Q940.20,732.30 940.20,732.30Q940.20,732.30 942.90,732.30Q945.60,732.30 945.60,732.30Q945.60,732.30 948.29,732.30Q950.99,732.30 950.99,732.30Q950.99,732.30 953.68,732.30Q956.38,732.30 956.38,732.30Q956.38,732.30 959.07,732.30Q961.77,732.30 961.77,732.30Q961.77,732.30 964.46,732.30Q967.15,732.30 967.15,732.30Q967.15,732.30 969.85,732.30Q972.55,732.30 972.55,712.15Q972.55,692.00 975.24,692.00Q977.93,692.00 977.93,692.00Q977.93,692.00 980.63,692.00Q983.33,692.00 983.33,712.15Q983.33,732.30 986.02,732.30Q988.72,732.30 988.72,732.30Q988.72,732.30 991.41,732.30Q994.11,732.30 994.11,712.15Q994.11,692.00 996.80,692.00Q999.50,692.00 999.50,712.15Q999.50,732.30 1002.19,732.30Q1004.88,732.30 1004.88,732.30Q1004.88,732.30 1007.58,732.30Q1010.28,732.30 1010.28,732.30Q1010.28,732.30 1012.97,732.30Q1015.66,732.30 1015.66,732.30Q1015.66,732.30 1018.36,732.30Q1021.06,732.30 1021.06,732.30Q1021.06,732.30 1023.75,732.30Q1026.45,732.30 1026.45,732.30Q1026.45,732.30 1029.14,732.30Q1031.84,732.30 1031.84,732.30Q1031.84,732.30 1034.53,732.30Q1037.22,732.30 1037.22,732.30Q1037.22,732.30 1039.92,732.30Q1042.62,732.30 1042.62,732.30Q1042.62,732.30 1045.31,732.30Q1048.01,732.30 1048.01,732.30Q1048.01,732.30 1050.70,732.30Q1053.39,732.30 1053.39,732.30Q1053.39,732.30 1056.09,732.30Q1058.78,732.30 1058.78,732.30Q1058.78,732.30 1061.48,732.30Q1064.17,732.30 1064.17,732.30Q1064.17,732.30 1066.87,732.30Q1069.57,732.30 1069.57,732.30Q1069.57,732.30 1072.26,732.30Q1074.95,732.30 1074.95,732.30Q1074.95,732.30 1077.65,732.30Q1080.35,732.30 1080.35,732.30Q1080.35,732.30 1083.04,732.30Q1085.74,732.30 1085.74,732.30Q1085.74,732.30 1088.43,732.30Q1091.12,732.30 1091.12,712.15Q1091.12,692.00 1093.82,692.00Q1096.51,692.00 1096.51,712.15Q1096.51,732.30 1099.21,732.30Q1101.90,732.30 1101.90,712.15Q1101.90,692.00 1104.60,692.00Q1107.30,692.00 1107.30,712.15Q1107.30,732.30 1109.99,732.30Q1112.68,732.30 1112.68,712.15Q1112.68,692.00 1115.38,692.00Q1118.08,692.00 1118.08,712.15Q1118.08,732.30 1120.77,732.30Q1123.47,732.30 1123.47,732.30Q1123.47,732.30 1126.16,732.30Q1128.86,732.30 1128.86,732.30Q1128.86,732.30 1131.55,732.30Q1134.24,732.30 1134.24,732.30Q1134.24,732.30 1136.94,732.30Q1139.63,732.30 1139.63,732.30Q1139.63,732.30 1142.33,732.30Q1145.03,732.30 1145.03,732.30Q1145.03,732.30 1147.72,732.30Q1150.41,732.30 1150.41,732.30Q1150.41,732.30 1153.11,732.30Q1155.81,732.30 1155.81,732.30Q1155.81,732.30 1158.50,732.30Q1161.19,732.30 1161.19,732.30Q1161.19,732.30 1163.89,732.30Q1166.59,732.30 1166.59,712.15Q1166.59,692.00 1169.28,692.00Q1171.97,692.00 1171.97,712.15Q1171.97,732.30 1174.67,732.30Q1177.37,732.30 1177.37,732.30Q1177.37,732.30 1180.06,732.30Q1182.76,732.30 1182.76,712.15Q1182.76,692.00 1185.45,692.00Q1188.14,692.00 1188.14,712.15Q1188.14,732.30 1190.84,732.30Q1193.53,732.30 1193.53,732.30Q1193.53,732.30 1196.23,732.30Q1198.92,732.30 1198.92,732.30Q1198.92,732.30 1201.62,732.30Q1204.32,732.30 1204.32,732.30Q1204.32,732.30 1207.01,732.30Q1209.70,732.30 1209.70,732.30Q1209.70,732.30 1212.40,732.30Q1215.10,732.30 1215.10,732.30Q1215.10,732.30 1217.79,732.30Q1220.49,732.30 1220.49,732.30Q1220.49,732.30 1223.18,732.30Q1225.88,732.30 1225.88,732.30Q1225.88,732.30 1228.57,732.30Q1231.26,732.30 1231.26,732.30Q1231.26,732.30 1233.96,732.30Q1236.65,732.30 1236.65,732.30Q1236.65,732.30 1239.35,732.30Q1242.05,732.30 1242.05,712.15Q1242.05,692.00 1244.74,692.00Q1247.43,692.00 1247.43,712.15Q1247.43,732.30 1250.13,732.30Q1252.83,732.30 1252.83,732.30Q1252.83,732.30 1255.52,732.30Q1258.22,732.30 1258.22,732.30Q1258.22,732.30 1260.91,732.30Q1263.61,732.30 1263.61,732.30Q1263.61,732.30 1266.30,732.30Q1268.99,732.30 1268.99,732.30Q1268.99,732.30 1271.69,732.30Q1274.38,732.30 1274.38,732.30Q1274.38,732.30 1277.08,732.30Q1279.78,732.30 1279.78,732.30Q1279.78,732.30 1282.47,732.30Q1285.16,732.30 1285.16,732.30Q1285.16,732.30 1287.86,732.30Q1290.56,732.30 1290.56,732.30Q1290.56,732.30 1293.25,732.30Q1295.94,732.30 1295.94,732.30Q1295.94,732.30 1298.64,732.30Q1301.34,732.30 1301.34,732.30Q1301.34,732.30 1304.03,732.30Q1306.72,732.30 1306.72,732.30Q1306.72,732.30 1309.42,732.30Q1312.12,732.30 1312.12,732.30Q1312.12,732.30 1314.81,732.30" fill="none" stroke="#4b9dcc" stroke-width="1.8" stroke-linejoin="round"/><path d="M936.50,785.30 L947.80,785.30" stroke="#4b9dcc" stroke-width="2.2" stroke-linecap="butt"/><path d="M1067.50,785.30 L1077.70,785.30" stroke="#9ec0d2" stroke-width="1.6" stroke-dasharray="0.01 4.2" stroke-linecap="round"/><path d="M1411.00,571.50 L1868.30,571.50" stroke="#f0f0f0" stroke-width="1"/><path d="M1411.00,624.50 L1868.30,624.50" stroke="#f0f0f0" stroke-width="1"/><path d="M1411.00,678.50 L1868.30,678.50" stroke="#f0f0f0" stroke-width="1"/><path d="M1411.00,732.50 L1868.30,732.50" stroke="#f0f0f0" stroke-width="1"/><path d="M1411.00,732.60Q1413.57,732.60 1413.57,732.60Q1413.57,732.60 1416.14,732.60Q1418.71,732.60 1418.71,732.60Q1418.71,732.60 1421.28,732.60Q1423.86,732.60 1423.86,732.60Q1423.86,732.60 1426.43,732.60Q1429.00,732.60 1429.00,732.60Q1429.00,732.60 1431.57,732.60Q1434.14,732.60 1434.14,732.60Q1434.14,732.60 1436.71,732.60Q1439.28,732.60 1439.28,732.60Q1439.28,732.60 1441.85,732.60Q1444.42,732.60 1444.42,732.60Q1444.42,732.60 1446.99,732.60Q1449.57,732.60 1449.57,726.41Q1449.57,720.21 1452.14,720.21Q1454.71,720.21 1454.71,719.46Q1454.71,718.70 1457.28,718.70Q1459.85,718.70 1459.85,718.70Q1459.85,718.70 1462.42,718.70Q1464.99,718.70 1464.99,717.57Q1464.99,716.44 1467.56,716.44Q1470.13,716.44 1470.13,720.21Q1470.13,723.98 1472.70,723.98Q1475.28,723.98 1475.28,721.18Q1475.28,718.38 1477.85,718.38Q1480.42,718.38 1480.42,718.81Q1480.42,719.24 1482.99,719.24Q1485.56,719.24 1485.56,725.92Q1485.56,732.60 1488.13,732.60Q1490.70,732.60 1490.70,732.60Q1490.70,732.60 1493.27,732.60Q1495.84,732.60 1495.84,732.60Q1495.84,732.60 1498.41,732.60Q1500.99,732.60 1500.99,732.60Q1500.99,732.60 1503.56,732.60Q1506.13,732.60 1506.13,732.60Q1506.13,732.60 1508.70,732.60Q1511.27,732.60 1511.27,732.60Q1511.27,732.60 1513.84,732.60Q1516.41,732.60 1516.41,732.60Q1516.41,732.60 1518.98,732.60Q1521.55,732.60 1521.55,732.60Q1521.55,732.60 1524.12,732.60Q1526.70,732.60 1526.70,732.60Q1526.70,732.60 1529.27,732.60Q1531.84,732.60 1531.84,732.60Q1531.84,732.60 1534.41,732.60Q1536.98,732.60 1536.98,732.60Q1536.98,732.60 1539.55,732.60Q1542.12,732.60 1542.12,732.60Q1542.12,732.60 1544.69,732.60Q1547.26,732.60 1547.26,732.60Q1547.26,732.60 1549.83,732.60Q1552.41,732.60 1552.41,732.60Q1552.41,732.60 1554.98,732.60Q1557.55,732.60 1557.55,732.60Q1557.55,732.60 1560.12,732.60Q1562.69,732.60 1562.69,732.60Q1562.69,732.60 1565.26,732.60Q1567.83,732.60 1567.83,732.60Q1567.83,732.60 1570.40,732.60Q1572.97,732.60 1572.97,732.60Q1572.97,732.60 1575.54,732.60Q1578.12,732.60 1578.12,732.60Q1578.12,732.60 1580.69,732.60Q1583.26,732.60 1583.26,732.60Q1583.26,732.60 1585.83,732.60Q1588.40,732.60 1588.40,732.60Q1588.40,732.60 1590.97,732.60Q1593.54,732.60 1593.54,725.92Q1593.54,719.24 1596.11,719.24Q1598.68,719.24 1598.68,725.92Q1598.68,732.60 1601.25,732.60Q1603.82,732.60 1603.82,732.60Q1603.82,732.60 1606.40,732.60Q1608.97,732.60 1608.97,726.41Q1608.97,720.21 1611.54,720.21Q1614.11,720.21 1614.11,726.41Q1614.11,732.60 1616.68,732.60Q1619.25,732.60 1619.25,732.60Q1619.25,732.60 1621.82,732.60Q1624.39,732.60 1624.39,724.68Q1624.39,716.76 1626.96,716.76Q1629.53,716.76 1629.53,724.68Q1629.53,732.60 1632.11,732.60Q1634.68,732.60 1634.68,732.60Q1634.68,732.60 1637.25,732.60Q1639.82,732.60 1639.82,732.60Q1639.82,732.60 1642.39,732.60Q1644.96,732.60 1644.96,724.04Q1644.96,715.47 1647.53,715.47Q1650.10,715.47 1650.10,724.04Q1650.10,732.60 1652.67,732.60Q1655.24,732.60 1655.24,732.60Q1655.24,732.60 1657.82,732.60Q1660.39,732.60 1660.39,732.60Q1660.39,732.60 1662.96,732.60Q1665.53,732.60 1665.53,732.60Q1665.53,732.60 1668.10,732.60Q1670.67,732.60 1670.67,732.60Q1670.67,732.60 1673.24,732.60Q1675.81,732.60 1675.81,732.60Q1675.81,732.60 1678.38,732.60Q1680.95,732.60 1680.95,726.89Q1680.95,721.18 1683.53,721.18Q1686.10,721.18 1686.10,726.89Q1686.10,732.60 1688.67,732.60Q1691.24,732.60 1691.24,732.60Q1691.24,732.60 1693.81,732.60Q1696.38,732.60 1696.38,699.74Q1696.38,666.88 1698.95,666.88Q1701.52,666.88 1701.52,699.74Q1701.52,732.60 1704.09,732.60Q1706.66,732.60 1706.66,732.60Q1706.66,732.60 1709.24,732.60Q1711.81,732.60 1711.81,732.60Q1711.81,732.60 1714.38,732.60Q1716.95,732.60 1716.95,732.60Q1716.95,732.60 1719.52,732.60Q1722.09,732.60 1722.09,672.92Q1722.09,613.24 1724.66,613.24Q1727.23,613.24 1727.23,672.92Q1727.23,732.60 1729.80,732.60Q1732.38,732.60 1732.38,732.60Q1732.38,732.60 1734.95,732.60Q1737.52,732.60 1737.52,732.60Q1737.52,732.60 1740.09,732.60Q1742.66,732.60 1742.66,732.60Q1742.66,732.60 1745.23,732.60Q1747.80,732.60 1747.80,732.60Q1747.80,732.60 1750.37,732.60Q1752.94,732.60 1752.94,732.60Q1752.94,732.60 1755.51,732.60Q1758.09,732.60 1758.09,732.60Q1758.09,732.60 1760.66,732.60Q1763.23,732.60 1763.23,732.60Q1763.23,732.60 1765.80,732.60Q1768.37,732.60 1768.37,732.60Q1768.37,732.60 1770.94,732.60Q1773.51,732.60 1773.51,732.60Q1773.51,732.60 1776.08,732.60Q1778.65,732.60 1778.65,732.60Q1778.65,732.60 1781.22,732.60Q1783.80,732.60 1783.80,732.60Q1783.80,732.60 1786.37,732.60Q1788.94,732.60 1788.94,732.60Q1788.94,732.60 1791.51,732.60Q1794.08,732.60 1794.08,732.60Q1794.08,732.60 1796.65,732.60Q1799.22,732.60 1799.22,732.60Q1799.22,732.60 1801.79,732.60Q1804.36,732.60 1804.36,732.60Q1804.36,732.60 1806.93,732.60Q1809.51,732.60 1809.51,732.60Q1809.51,732.60 1812.08,732.60Q1814.65,732.60 1814.65,732.60Q1814.65,732.60 1817.22,732.60Q1819.79,732.60 1819.79,732.60Q1819.79,732.60 1822.36,732.60Q1824.93,732.60 1824.93,732.60Q1824.93,732.60 1827.50,732.60Q1830.07,732.60 1830.07,732.60Q1830.07,732.60 1832.64,732.60Q1835.22,732.60 1835.22,732.60Q1835.22,732.60 1837.79,732.60Q1840.36,732.60 1840.36,732.60Q1840.36,732.60 1842.93,732.60Q1845.50,732.60 1845.50,714.02Q1845.50,695.43 1848.07,695.43Q1850.64,695.43 1850.64,708.79Q1850.64,722.15 1853.21,722.15Q1855.78,722.15 1855.78,727.38Q1855.78,732.60 1858.35,732.60Q1860.93,732.60 1860.93,732.60Q1860.93,732.60 1863.50,732.60Q1866.07,732.60 1866.07,732.60Q1866.07,732.60 1868.64,732.60" fill="none" stroke="#82a8bf" stroke-width="1.8" stroke-dasharray="0.01 3.6" stroke-linecap="round"/><path d="M1411.00,732.60Q1413.57,732.60 1413.57,732.60Q1413.57,732.60 1416.14,732.60Q1418.71,732.60 1418.71,732.60Q1418.71,732.60 1421.28,732.60Q1423.86,732.60 1423.86,732.60Q1423.86,732.60 1426.43,732.60Q1429.00,732.60 1429.00,732.60Q1429.00,732.60 1431.57,732.60Q1434.14,732.60 1434.14,732.60Q1434.14,732.60 1436.71,732.60Q1439.28,732.60 1439.28,732.60Q1439.28,732.60 1441.85,732.60Q1444.42,732.60 1444.42,732.60Q1444.42,732.60 1446.99,732.60Q1449.57,732.60 1449.57,732.60Q1449.57,732.60 1452.14,732.60Q1454.71,732.60 1454.71,732.60Q1454.71,732.60 1457.28,732.60Q1459.85,732.60 1459.85,732.60Q1459.85,732.60 1462.42,732.60Q1464.99,732.60 1464.99,732.60Q1464.99,732.60 1467.56,732.60Q1470.13,732.60 1470.13,732.60Q1470.13,732.60 1472.70,732.60Q1475.28,732.60 1475.28,732.60Q1475.28,732.60 1477.85,732.60Q1480.42,732.60 1480.42,732.60Q1480.42,732.60 1482.99,732.60Q1485.56,732.60 1485.56,732.60Q1485.56,732.60 1488.13,732.60Q1490.70,732.60 1490.70,732.60Q1490.70,732.60 1493.27,732.60Q1495.84,732.60 1495.84,732.60Q1495.84,732.60 1498.41,732.60Q1500.99,732.60 1500.99,732.60Q1500.99,732.60 1503.56,732.60Q1506.13,732.60 1506.13,732.60Q1506.13,732.60 1508.70,732.60Q1511.27,732.60 1511.27,732.60Q1511.27,732.60 1513.84,732.60Q1516.41,732.60 1516.41,732.60Q1516.41,732.60 1518.98,732.60Q1521.55,732.60 1521.55,732.60Q1521.55,732.60 1524.12,732.60Q1526.70,732.60 1526.70,732.60Q1526.70,732.60 1529.27,732.60Q1531.84,732.60 1531.84,732.60Q1531.84,732.60 1534.41,732.60Q1536.98,732.60 1536.98,732.60Q1536.98,732.60 1539.55,732.60Q1542.12,732.60 1542.12,725.92Q1542.12,719.24 1544.69,719.24Q1547.26,719.24 1547.26,667.69Q1547.26,616.14 1549.83,616.14Q1552.41,616.14 1552.41,674.37Q1552.41,732.60 1554.98,732.60Q1557.55,732.60 1557.55,732.60Q1557.55,732.60 1560.12,732.60Q1562.69,732.60 1562.69,726.41Q1562.69,720.21 1565.26,720.21Q1567.83,720.21 1567.83,726.41Q1567.83,732.60 1570.40,732.60Q1572.97,732.60 1572.97,732.60Q1572.97,732.60 1575.54,732.60Q1578.12,732.60 1578.12,732.60Q1578.12,732.60 1580.69,732.60Q1583.26,732.60 1583.26,732.60Q1583.26,732.60 1585.83,732.60Q1588.40,732.60 1588.40,732.60Q1588.40,732.60 1590.97,732.60Q1593.54,732.60 1593.54,732.60Q1593.54,732.60 1596.11,732.60Q1598.68,732.60 1598.68,732.60Q1598.68,732.60 1601.25,732.60Q1603.82,732.60 1603.82,732.60Q1603.82,732.60 1606.40,732.60Q1608.97,732.60 1608.97,732.60Q1608.97,732.60 1611.54,732.60Q1614.11,732.60 1614.11,732.60Q1614.11,732.60 1616.68,732.60Q1619.25,732.60 1619.25,732.60Q1619.25,732.60 1621.82,732.60Q1624.39,732.60 1624.39,732.60Q1624.39,732.60 1626.96,732.60Q1629.53,732.60 1629.53,732.60Q1629.53,732.60 1632.11,732.60Q1634.68,732.60 1634.68,732.60Q1634.68,732.60 1637.25,732.60Q1639.82,732.60 1639.82,732.60Q1639.82,732.60 1642.39,732.60Q1644.96,732.60 1644.96,732.60Q1644.96,732.60 1647.53,732.60Q1650.10,732.60 1650.10,732.60Q1650.10,732.60 1652.67,732.60Q1655.24,732.60 1655.24,721.18Q1655.24,709.76 1657.82,709.76Q1660.39,709.76 1660.39,721.18Q1660.39,732.60 1662.96,732.60Q1665.53,732.60 1665.53,726.41Q1665.53,720.21 1668.10,720.21Q1670.67,720.21 1670.67,726.41Q1670.67,732.60 1673.24,732.60Q1675.81,732.60 1675.81,725.92Q1675.81,719.24 1678.38,719.24Q1680.95,719.24 1680.95,725.92Q1680.95,732.60 1683.53,732.60Q1686.10,732.60 1686.10,732.60Q1686.10,732.60 1688.67,732.60Q1691.24,732.60 1691.24,732.60Q1691.24,732.60 1693.81,732.60Q1696.38,732.60 1696.38,732.60Q1696.38,732.60 1698.95,732.60Q1701.52,732.60 1701.52,732.60Q1701.52,732.60 1704.09,732.60Q1706.66,732.60 1706.66,732.60Q1706.66,732.60 1709.24,732.60Q1711.81,732.60 1711.81,732.60Q1711.81,732.60 1714.38,732.60Q1716.95,732.60 1716.95,732.60Q1716.95,732.60 1719.52,732.60Q1722.09,732.60 1722.09,732.60Q1722.09,732.60 1724.66,732.60Q1727.23,732.60 1727.23,725.92Q1727.23,719.24 1729.80,719.24Q1732.38,719.24 1732.38,725.92Q1732.38,732.60 1734.95,732.60Q1737.52,732.60 1737.52,732.60Q1737.52,732.60 1740.09,732.60Q1742.66,732.60 1742.66,720.05Q1742.66,707.50 1745.23,707.50Q1747.80,707.50 1747.80,720.05Q1747.80,732.60 1750.37,732.60Q1752.94,732.60 1752.94,732.60Q1752.94,732.60 1755.51,732.60Q1758.09,732.60 1758.09,732.60Q1758.09,732.60 1760.66,732.60Q1763.23,732.60 1763.23,732.60Q1763.23,732.60 1765.80,732.60Q1768.37,732.60 1768.37,732.60Q1768.37,732.60 1770.94,732.60Q1773.51,732.60 1773.51,732.60Q1773.51,732.60 1776.08,732.60Q1778.65,732.60 1778.65,732.60Q1778.65,732.60 1781.22,732.60Q1783.80,732.60 1783.80,732.60Q1783.80,732.60 1786.37,732.60Q1788.94,732.60 1788.94,732.60Q1788.94,732.60 1791.51,732.60Q1794.08,732.60 1794.08,732.60Q1794.08,732.60 1796.65,732.60Q1799.22,732.60 1799.22,726.41Q1799.22,720.21 1801.79,720.21Q1804.36,720.21 1804.36,726.41Q1804.36,732.60 1806.93,732.60Q1809.51,732.60 1809.51,732.60Q1809.51,732.60 1812.08,732.60Q1814.65,732.60 1814.65,732.60Q1814.65,732.60 1817.22,732.60Q1819.79,732.60 1819.79,732.60Q1819.79,732.60 1822.36,732.60Q1824.93,732.60 1824.93,732.60Q1824.93,732.60 1827.50,732.60Q1830.07,732.60 1830.07,732.60Q1830.07,732.60 1832.64,732.60Q1835.22,732.60 1835.22,732.60Q1835.22,732.60 1837.79,732.60Q1840.36,732.60 1840.36,732.60Q1840.36,732.60 1842.93,732.60Q1845.50,732.60 1845.50,732.60Q1845.50,732.60 1848.07,732.60Q1850.64,732.60 1850.64,732.60Q1850.64,732.60 1853.21,732.60Q1855.78,732.60 1855.78,732.60Q1855.78,732.60 1858.35,732.60Q1860.93,732.60 1860.93,732.60Q1860.93,732.60 1863.50,732.60Q1866.07,732.60 1866.07,732.60Q1866.07,732.60 1868.64,732.60L1868.64,732.60 L1411.00,732.60Z" fill="url(#ga)" stroke="none"/><path d="M1411.00,732.60Q1413.57,732.60 1413.57,732.60Q1413.57,732.60 1416.14,732.60Q1418.71,732.60 1418.71,732.60Q1418.71,732.60 1421.28,732.60Q1423.86,732.60 1423.86,732.60Q1423.86,732.60 1426.43,732.60Q1429.00,732.60 1429.00,732.60Q1429.00,732.60 1431.57,732.60Q1434.14,732.60 1434.14,732.60Q1434.14,732.60 1436.71,732.60Q1439.28,732.60 1439.28,732.60Q1439.28,732.60 1441.85,732.60Q1444.42,732.60 1444.42,732.60Q1444.42,732.60 1446.99,732.60Q1449.57,732.60 1449.57,732.60Q1449.57,732.60 1452.14,732.60Q1454.71,732.60 1454.71,732.60Q1454.71,732.60 1457.28,732.60Q1459.85,732.60 1459.85,732.60Q1459.85,732.60 1462.42,732.60Q1464.99,732.60 1464.99,732.60Q1464.99,732.60 1467.56,732.60Q1470.13,732.60 1470.13,732.60Q1470.13,732.60 1472.70,732.60Q1475.28,732.60 1475.28,732.60Q1475.28,732.60 1477.85,732.60Q1480.42,732.60 1480.42,732.60Q1480.42,732.60 1482.99,732.60Q1485.56,732.60 1485.56,732.60Q1485.56,732.60 1488.13,732.60Q1490.70,732.60 1490.70,732.60Q1490.70,732.60 1493.27,732.60Q1495.84,732.60 1495.84,732.60Q1495.84,732.60 1498.41,732.60Q1500.99,732.60 1500.99,732.60Q1500.99,732.60 1503.56,732.60Q1506.13,732.60 1506.13,732.60Q1506.13,732.60 1508.70,732.60Q1511.27,732.60 1511.27,732.60Q1511.27,732.60 1513.84,732.60Q1516.41,732.60 1516.41,732.60Q1516.41,732.60 1518.98,732.60Q1521.55,732.60 1521.55,732.60Q1521.55,732.60 1524.12,732.60Q1526.70,732.60 1526.70,732.60Q1526.70,732.60 1529.27,732.60Q1531.84,732.60 1531.84,732.60Q1531.84,732.60 1534.41,732.60Q1536.98,732.60 1536.98,732.60Q1536.98,732.60 1539.55,732.60Q1542.12,732.60 1542.12,725.92Q1542.12,719.24 1544.69,719.24Q1547.26,719.24 1547.26,667.69Q1547.26,616.14 1549.83,616.14Q1552.41,616.14 1552.41,674.37Q1552.41,732.60 1554.98,732.60Q1557.55,732.60 1557.55,732.60Q1557.55,732.60 1560.12,732.60Q1562.69,732.60 1562.69,726.41Q1562.69,720.21 1565.26,720.21Q1567.83,720.21 1567.83,726.41Q1567.83,732.60 1570.40,732.60Q1572.97,732.60 1572.97,732.60Q1572.97,732.60 1575.54,732.60Q1578.12,732.60 1578.12,732.60Q1578.12,732.60 1580.69,732.60Q1583.26,732.60 1583.26,732.60Q1583.26,732.60 1585.83,732.60Q1588.40,732.60 1588.40,732.60Q1588.40,732.60 1590.97,732.60Q1593.54,732.60 1593.54,732.60Q1593.54,732.60 1596.11,732.60Q1598.68,732.60 1598.68,732.60Q1598.68,732.60 1601.25,732.60Q1603.82,732.60 1603.82,732.60Q1603.82,732.60 1606.40,732.60Q1608.97,732.60 1608.97,732.60Q1608.97,732.60 1611.54,732.60Q1614.11,732.60 1614.11,732.60Q1614.11,732.60 1616.68,732.60Q1619.25,732.60 1619.25,732.60Q1619.25,732.60 1621.82,732.60Q1624.39,732.60 1624.39,732.60Q1624.39,732.60 1626.96,732.60Q1629.53,732.60 1629.53,732.60Q1629.53,732.60 1632.11,732.60Q1634.68,732.60 1634.68,732.60Q1634.68,732.60 1637.25,732.60Q1639.82,732.60 1639.82,732.60Q1639.82,732.60 1642.39,732.60Q1644.96,732.60 1644.96,732.60Q1644.96,732.60 1647.53,732.60Q1650.10,732.60 1650.10,732.60Q1650.10,732.60 1652.67,732.60Q1655.24,732.60 1655.24,721.18Q1655.24,709.76 1657.82,709.76Q1660.39,709.76 1660.39,721.18Q1660.39,732.60 1662.96,732.60Q1665.53,732.60 1665.53,726.41Q1665.53,720.21 1668.10,720.21Q1670.67,720.21 1670.67,726.41Q1670.67,732.60 1673.24,732.60Q1675.81,732.60 1675.81,725.92Q1675.81,719.24 1678.38,719.24Q1680.95,719.24 1680.95,725.92Q1680.95,732.60 1683.53,732.60Q1686.10,732.60 1686.10,732.60Q1686.10,732.60 1688.67,732.60Q1691.24,732.60 1691.24,732.60Q1691.24,732.60 1693.81,732.60Q1696.38,732.60 1696.38,732.60Q1696.38,732.60 1698.95,732.60Q1701.52,732.60 1701.52,732.60Q1701.52,732.60 1704.09,732.60Q1706.66,732.60 1706.66,732.60Q1706.66,732.60 1709.24,732.60Q1711.81,732.60 1711.81,732.60Q1711.81,732.60 1714.38,732.60Q1716.95,732.60 1716.95,732.60Q1716.95,732.60 1719.52,732.60Q1722.09,732.60 1722.09,732.60Q1722.09,732.60 1724.66,732.60Q1727.23,732.60 1727.23,725.92Q1727.23,719.24 1729.80,719.24Q1732.38,719.24 1732.38,725.92Q1732.38,732.60 1734.95,732.60Q1737.52,732.60 1737.52,732.60Q1737.52,732.60 1740.09,732.60Q1742.66,732.60 1742.66,720.05Q1742.66,707.50 1745.23,707.50Q1747.80,707.50 1747.80,720.05Q1747.80,732.60 1750.37,732.60Q1752.94,732.60 1752.94,732.60Q1752.94,732.60 1755.51,732.60Q1758.09,732.60 1758.09,732.60Q1758.09,732.60 1760.66,732.60Q1763.23,732.60 1763.23,732.60Q1763.23,732.60 1765.80,732.60Q1768.37,732.60 1768.37,732.60Q1768.37,732.60 1770.94,732.60Q1773.51,732.60 1773.51,732.60Q1773.51,732.60 1776.08,732.60Q1778.65,732.60 1778.65,732.60Q1778.65,732.60 1781.22,732.60Q1783.80,732.60 1783.80,732.60Q1783.80,732.60 1786.37,732.60Q1788.94,732.60 1788.94,732.60Q1788.94,732.60 1791.51,732.60Q1794.08,732.60 1794.08,732.60Q1794.08,732.60 1796.65,732.60Q1799.22,732.60 1799.22,726.41Q1799.22,720.21 1801.79,720.21Q1804.36,720.21 1804.36,726.41Q1804.36,732.60 1806.93,732.60Q1809.51,732.60 1809.51,732.60Q1809.51,732.60 1812.08,732.60Q1814.65,732.60 1814.65,732.60Q1814.65,732.60 1817.22,732.60Q1819.79,732.60 1819.79,732.60Q1819.79,732.60 1822.36,732.60Q1824.93,732.60 1824.93,732.60Q1824.93,732.60 1827.50,732.60Q1830.07,732.60 1830.07,732.60Q1830.07,732.60 1832.64,732.60Q1835.22,732.60 1835.22,732.60Q1835.22,732.60 1837.79,732.60Q1840.36,732.60 1840.36,732.60Q1840.36,732.60 1842.93,732.60Q1845.50,732.60 1845.50,732.60Q1845.50,732.60 1848.07,732.60Q1850.64,732.60 1850.64,732.60Q1850.64,732.60 1853.21,732.60Q1855.78,732.60 1855.78,732.60Q1855.78,732.60 1858.35,732.60Q1860.93,732.60 1860.93,732.60Q1860.93,732.60 1863.50,732.60Q1866.07,732.60 1866.07,732.60Q1866.07,732.60 1868.64,732.60" fill="none" stroke="#4b9dcc" stroke-width="1.8" stroke-linejoin="round"/><path d="M1491.50,785.30 L1502.80,785.30" stroke="#4b9dcc" stroke-width="2.2" stroke-linecap="butt"/><path d="M1622.60,785.30 L1632.80,785.30" stroke="#9ec0d2" stroke-width="1.6" stroke-dasharray="0.01 4.2" stroke-linecap="round"/><path d="M1400.00,904.50 L1869.00,904.50" stroke="#f0f0f0" stroke-width="1"/><path d="M1534.00,950 C1535.00,930 1535.20,904.30 1536.00,904.30 L1538.70,904.30 C1539.50,904.30 1539.70,930 1540.70,950" fill="#b3e3fa" stroke="#4aa3d6" stroke-width="1.6"/><path d="M1539.60,950 C1540.60,930 1540.80,906.00 1541.60,906.00 L1542.70,906.00 C1543.50,906.00 1543.70,930 1544.70,950" fill="#e2c8fb" stroke="#8a62c8" stroke-width="1.6"/><path d="M1555.50,950 C1556.50,930 1556.70,904.30 1557.50,904.30 L1557.90,904.30 C1558.70,904.30 1558.90,930 1559.90,950" fill="#b3e3fa" stroke="#4aa3d6" stroke-width="1.6"/><path d="M1649.60,950 C1650.60,930 1650.80,904.30 1651.60,904.30 L1653.00,904.30 C1653.80,904.30 1654.00,930 1655.00,950" fill="#e2c8fb" stroke="#8a62c8" stroke-width="1.6"/><path d="M1660.30,950 C1661.30,930 1661.50,904.30 1662.30,904.30 L1663.40,904.30 C1664.20,904.30 1664.40,930 1665.40,950" fill="#b3e3fa" stroke="#4aa3d6" stroke-width="1.6"/><path d="M1671.40,950 C1672.40,930 1672.60,904.30 1673.40,904.30 L1674.00,904.30 C1674.80,904.30 1675.00,930 1676.00,950" fill="#b3e3fa" stroke="#4aa3d6" stroke-width="1.6"/><path d="M1724.10,950 C1725.10,930 1725.30,904.30 1726.10,904.30 L1726.60,904.30 C1727.40,904.30 1727.60,930 1728.60,950" fill="#b3e3fa" stroke="#4aa3d6" stroke-width="1.6"/><path d="M1739.60,950 C1740.60,930 1740.80,904.30 1741.60,904.30 L1742.20,904.30 C1743.00,904.30 1743.20,930 1744.20,950" fill="#e2c8fb" stroke="#8a62c8" stroke-width="1.6"/><path d="M1797.30,950 C1798.30,930 1798.50,904.30 1799.30,904.30 L1800.70,904.30 C1801.50,904.30 1801.70,930 1802.70,950" fill="#b3e3fa" stroke="#4aa3d6" stroke-width="1.6"/></svg>
<div class="t" style="top:231.10px;font-size:10px;line-height:13px;color:#696969;left:253.40px;letter-spacing:0.6px">$1.5K</div>
<div class="t" style="top:270.80px;font-size:10px;line-height:13px;color:#696969;left:253.40px;letter-spacing:0.6px">$1K</div>
<div class="t" style="top:311.90px;font-size:10px;line-height:13px;color:#696969;left:253.40px;letter-spacing:0.6px">$500</div>
<div class="t" style="top:351.90px;font-size:10px;line-height:13px;color:#696969;left:253.40px;letter-spacing:0.6px">$0</div>
<div class="t" style="top:391.60px;font-size:10px;line-height:13px;color:#696969;left:253.40px;letter-spacing:0.6px">-$500</div>
<div class="t" style="top:412.10px;font-size:10px;line-height:13px;color:#696969;left:305.30px;transform:translateX(-50%)">Sep 17</div>
<div class="t" style="top:412.10px;font-size:10px;line-height:13px;color:#696969;left:356.33px;transform:translateX(-50%)">Sep 27</div>
<div class="t" style="top:412.10px;font-size:10px;line-height:13px;color:#696969;left:407.36px;transform:translateX(-50%)">Oct 7</div>
<div class="t" style="top:412.10px;font-size:10px;line-height:13px;color:#696969;left:458.39px;transform:translateX(-50%)">Oct 17</div>
<div class="t" style="top:412.10px;font-size:10px;line-height:13px;color:#696969;left:509.42px;transform:translateX(-50%)">Oct 27</div>
<div class="t" style="top:412.10px;font-size:10px;line-height:13px;color:#696969;left:560.45px;transform:translateX(-50%)">Nov 6</div>
<div class="t" style="top:412.10px;font-size:10px;line-height:13px;color:#696969;left:611.48px;transform:translateX(-50%)">Nov 16</div>
<div class="t" style="top:412.10px;font-size:10px;line-height:13px;color:#696969;left:662.51px;transform:translateX(-50%)">Nov 26</div>
<div class="t" style="top:412.10px;font-size:10px;line-height:13px;color:#696969;left:713.54px;transform:translateX(-50%)">Dec 6</div>
<div class="t" style="top:446.30px;font-size:10px;line-height:13px;color:#696969;letter-spacing:-0.025px;left:399.50px">Sep 17–Dec 15, 2024</div>
<div class="t" style="top:446.30px;font-size:10px;line-height:13px;color:#696969;letter-spacing:0.026px;left:530.40px">Jun 19–Sep 16, 2024</div>
<div class="t" style="top:201.90px;font-size:10px;line-height:13px;color:#696969;left:808.80px;letter-spacing:0.6px">$5K</div>
<div class="t" style="top:247.00px;font-size:10px;line-height:13px;color:#696969;left:808.80px;letter-spacing:0.6px">$4K</div>
<div class="t" style="top:292.80px;font-size:10px;line-height:13px;color:#696969;left:808.80px;letter-spacing:0.6px">$3K</div>
<div class="t" style="top:338.20px;font-size:10px;line-height:13px;color:#696969;left:808.80px;letter-spacing:0.6px">$2K</div>
<div class="t" style="top:382.90px;font-size:10px;line-height:13px;color:#696969;left:808.80px;letter-spacing:0.6px">$1K</div>
<div class="t" style="top:428.40px;font-size:10px;line-height:13px;color:#696969;left:808.80px;letter-spacing:0.6px">$0</div>
<div class="t" style="top:448.20px;font-size:10px;line-height:13px;color:#696969;letter-spacing:0.176px;left:965.70px;transform:translateX(-50%)">Online Store</div>
<div class="t" style="top:448.20px;font-size:10px;line-height:13px;color:#696969;left:1198.60px;transform:translateX(-50%)">Shop</div>
<div class="t" style="top:231.10px;font-size:10px;line-height:13px;color:#696969;left:1362.70px;letter-spacing:0.6px">300</div>
<div class="t" style="top:284.90px;font-size:10px;line-height:13px;color:#696969;left:1362.70px;letter-spacing:0.6px">200</div>
<div class="t" style="top:338.90px;font-size:10px;line-height:13px;color:#696969;left:1362.70px;letter-spacing:0.6px">100</div>
<div class="t" style="top:392.30px;font-size:10px;line-height:13px;color:#696969;left:1362.70px;letter-spacing:0.6px">0</div>
<div class="t" style="top:412.10px;font-size:10px;line-height:13px;color:#696969;left:1401.30px;transform:translateX(-50%)">Sep 17</div>
<div class="t" style="top:412.10px;font-size:10px;line-height:13px;color:#696969;left:1453.93px;transform:translateX(-50%)">Sep 27</div>
<div class="t" style="top:412.10px;font-size:10px;line-height:13px;color:#696969;left:1506.56px;transform:translateX(-50%)">Oct 7</div>
<div class="t" style="top:412.10px;font-size:10px;line-height:13px;color:#696969;left:1559.19px;transform:translateX(-50%)">Oct 17</div>
<div class="t" style="top:412.10px;font-size:10px;line-height:13px;color:#696969;left:1611.82px;transform:translateX(-50%)">Oct 27</div>
<div class="t" style="top:412.10px;font-size:10px;line-height:13px;color:#696969;left:1664.45px;transform:translateX(-50%)">Nov 6</div>
<div class="t" style="top:412.10px;font-size:10px;line-height:13px;color:#696969;left:1717.08px;transform:translateX(-50%)">Nov 16</div>
<div class="t" style="top:412.10px;font-size:10px;line-height:13px;color:#696969;left:1769.71px;transform:translateX(-50%)">Nov 26</div>
<div class="t" style="top:412.10px;font-size:10px;line-height:13px;color:#696969;left:1822.34px;transform:translateX(-50%)">Dec 6</div>
<div class="t" style="top:446.30px;font-size:10px;line-height:13px;color:#696969;letter-spacing:-0.025px;left:1508.80px">Sep 17–Dec 15, 2024</div>
<div class="t" style="top:446.30px;font-size:10px;line-height:13px;color:#696969;letter-spacing:0.026px;left:1640.00px">Jun 19–Sep 16, 2024</div>
<div class="t" style="top:563.80px;font-size:10px;line-height:13px;color:#696969;left:809.20px;letter-spacing:0.6px">4</div>
<div class="t" style="top:603.90px;font-size:10px;line-height:13px;color:#696969;left:809.20px;letter-spacing:0.6px">3</div>
<div class="t" style="top:644.80px;font-size:10px;line-height:13px;color:#696969;left:809.20px;letter-spacing:0.6px">2</div>
<div class="t" style="top:684.60px;font-size:10px;line-height:13px;color:#696969;left:809.20px;letter-spacing:0.6px">1</div>
<div class="t" style="top:724.70px;font-size:10px;line-height:13px;color:#696969;left:809.20px;letter-spacing:0.6px">0</div>
<div class="t" style="top:745.00px;font-size:10px;line-height:13px;color:#696969;left:835.10px;transform:translateX(-50%)">Sep 17</div>
<div class="t" style="top:745.00px;font-size:10px;line-height:13px;color:#696969;left:889.00px;transform:translateX(-50%)">Sep 27</div>
<div class="t" style="top:745.00px;font-size:10px;line-height:13px;color:#696969;left:942.90px;transform:translateX(-50%)">Oct 7</div>
<div class="t" style="top:745.00px;font-size:10px;line-height:13px;color:#696969;left:996.80px;transform:translateX(-50%)">Oct 17</div>
<div class="t" style="top:745.00px;font-size:10px;line-height:13px;color:#696969;left:1050.70px;transform:translateX(-50%)">Oct 27</div>
<div class="t" style="top:745.00px;font-size:10px;line-height:13px;color:#696969;left:1104.60px;transform:translateX(-50%)">Nov 6</div>
<div class="t" style="top:745.00px;font-size:10px;line-height:13px;color:#696969;left:1158.50px;transform:translateX(-50%)">Nov 16</div>
<div class="t" style="top:745.00px;font-size:10px;line-height:13px;color:#696969;left:1212.40px;transform:translateX(-50%)">Nov 26</div>
<div class="t" style="top:745.00px;font-size:10px;line-height:13px;color:#696969;left:1266.30px;transform:translateX(-50%)">Dec 6</div>
<div class="t" style="top:779.30px;font-size:10px;line-height:13px;color:#696969;letter-spacing:-0.025px;left:954.10px">Sep 17–Dec 15, 2024</div>
<div class="t" style="top:779.30px;font-size:10px;line-height:13px;color:#696969;letter-spacing:0.026px;left:1085.20px">Jun 19–Sep 16, 2024</div>
<div class="t" style="top:563.80px;font-size:10px;line-height:13px;color:#696969;left:1363.10px;letter-spacing:0.6px">$1.5K</div>
<div class="t" style="top:617.80px;font-size:10px;line-height:13px;color:#696969;left:1363.10px;letter-spacing:0.6px">$1K</div>
<div class="t" style="top:672.10px;font-size:10px;line-height:13px;color:#696969;left:1363.10px;letter-spacing:0.6px">$500</div>
<div class="t" style="top:724.70px;font-size:10px;line-height:13px;color:#696969;left:1363.10px;letter-spacing:0.6px">$0</div>
<div class="t" style="top:745.00px;font-size:10px;line-height:13px;color:#696969;left:1411.00px;transform:translateX(-50%)">Sep 17</div>
<div class="t" style="top:745.00px;font-size:10px;line-height:13px;color:#696969;left:1462.42px;transform:translateX(-50%)">Sep 27</div>
<div class="t" style="top:745.00px;font-size:10px;line-height:13px;color:#696969;left:1513.84px;transform:translateX(-50%)">Oct 7</div>
<div class="t" style="top:745.00px;font-size:10px;line-height:13px;color:#696969;left:1565.26px;transform:translateX(-50%)">Oct 17</div>
<div class="t" style="top:745.00px;font-size:10px;line-height:13px;color:#696969;left:1616.68px;transform:translateX(-50%)">Oct 27</div>
<div class="t" style="top:745.00px;font-size:10px;line-height:13px;color:#696969;left:1668.10px;transform:translateX(-50%)">Nov 6</div>
<div class="t" style="top:745.00px;font-size:10px;line-height:13px;color:#696969;left:1719.52px;transform:translateX(-50%)">Nov 16</div>
<div class="t" style="top:745.00px;font-size:10px;line-height:13px;color:#696969;left:1770.94px;transform:translateX(-50%)">Nov 26</div>
<div class="t" style="top:745.00px;font-size:10px;line-height:13px;color:#696969;left:1822.36px;transform:translateX(-50%)">Dec 6</div>
<div class="t" style="top:779.30px;font-size:10px;line-height:13px;color:#696969;letter-spacing:-0.025px;left:1509.10px">Sep 17–Dec 15, 2024</div>
<div class="t" style="top:779.30px;font-size:10px;line-height:13px;color:#696969;letter-spacing:0.026px;left:1640.20px">Jun 19–Sep 16, 2024</div>
<div class="t" style="top:896.90px;font-size:10px;line-height:13px;color:#696969;left:1362.60px">1</div>
<div class="abs" style="left:1553.75px;top:842.25px;width:208.4px;height:89px;background:#f8f9fb;border-radius:8px;box-shadow:0 0 0 1px rgba(0,0,0,.07),0 6px 14px rgba(0,0,0,.16)"></div>
<div class="abs" style="left:1679.4px;top:847.5px;width:37.5px;height:38.75px;background:#fcfcfd;border-radius:4px;box-shadow:0 0 0 1px rgba(0,0,0,.03)"></div>
<svg class="abs" style="left:1568px;top:857px" width="20" height="20" viewBox="0 0 20 20">
<path d="M2.2,8.6 C2,4.6 5,1.8 9.2,1.9 C13.6,2 17.8,4.4 17.8,9.2 C17.8,13.6 14.6,17.9 9.4,17.9 C5.4,17.9 2.4,13.4 2.2,8.6 Z" fill="#5aa822"/>
<path d="M6.6,10.4 L8.8,12.4 L12.4,7.6" fill="none" stroke="#d8f5b8" stroke-width="1.7" stroke-linecap="round" stroke-linejoin="round"/>
<circle cx="14.4" cy="14.6" r="2.7" fill="#c8242c" stroke="#f3dc8a" stroke-width="0.9"/>
</svg>
<svg class="abs" style="left:1608px;top:856px" width="20" height="20" viewBox="0 0 20 20">
<path d="M1.8,6.4 L6.6,6.4 L10.8,15.6 L8.4,17.4 Z" fill="#555866"/><path d="M8.4,17.4 L10.8,15.6 L12.4,12.4 L10.6,11.4 Z" fill="#8f93a3"/>
<circle cx="13.7" cy="7.4" r="4.4" fill="#c52340"/><path d="M12.2,5.9 L15.2,8.9 M15.2,5.9 L12.2,8.9" stroke="#f6d6dc" stroke-width="1.3"/>
</svg>
<svg class="abs" style="left:1649px;top:858.5px" width="17" height="17" viewBox="0 0 17 17" fill="none" stroke="#585858" stroke-width="0.85">
<rect x="5.6" y="1.8" width="2.8" height="14.3" rx="1.4"/>
<rect x="9.6" y="1.8" width="2.8" height="14.3" rx="1.4"/>
<rect x="1.2" y="5.7" width="14.6" height="2.8" rx="1.4"/>
<rect x="1.2" y="9.7" width="14.6" height="2.8" rx="1.4"/>
</svg>
<svg class="abs" style="left:1689px;top:858px" width="18" height="18" viewBox="0 0 18 18">
<path d="M2.6,16.4 C3.6,11.6 9.6,5 15.6,1.8 C15.4,6.6 10.8,12.4 4.2,14.8 Z" fill="#9064cc"/>
<path d="M5,13.8 C8.5,11.6 12,8.4 14.2,4.4 C13,8.4 10,11.6 6.4,13.6 Z" fill="#c9a6f2"/>
</svg>
<svg class="abs" style="left:1731px;top:858px" width="15" height="18" viewBox="0 0 15 18">
<path d="M1.5,5 C1.5,2.5 4,1 7.5,1 C11,1 13.5,2.5 13.5,5 L12,6 L12,16 C12,17 11,17.2 7.5,17.2 C4,17.2 3,17 3,16 L3,6 Z" fill="#2a2a2a"/>
<path d="M3.5,4.2 C5,3 10,3 11.5,4.2" fill="none" stroke="#777" stroke-width="0.8"/>
<path d="M5.6,9 L5.6,14.5 M9.4,9 L9.4,14.5 M5.6,11.7 L9.4,11.7" stroke="#bbb" stroke-width="1.1"/>
</svg>
<svg class="abs" style="left:1569px;top:897px" width="20" height="20" viewBox="0 0 20 20">
<path d="M8,1.5 C10,3 12.5,3.2 14.5,3 L14.5,9.5 C14.5,13 11.5,15.5 8,17 C4.5,15.5 1.5,13 1.5,9.5 L1.5,3 C3.5,3.2 6,3 8,1.5 Z" fill="#1a86d8"/>
<path d="M8,1.5 C10,3 12.5,3.2 14.5,3 L14.5,9.5 L8,9.5 Z" fill="#3aaef0"/><path d="M1.5,9.5 L8,9.5 L8,17 C4.5,15.5 1.5,13 1.5,9.5 Z" fill="#0d6cc0"/>
<path d="M12.5,9.5 L18.5,18.5 L6.5,18.5 Z" fill="#f2c230" stroke="#f2c230" stroke-width="0.8" stroke-linejoin="round"/>
<path d="M12.5,12.3 L12.5,15.5" stroke="#222" stroke-width="1.2"/><circle cx="12.5" cy="17" r="0.65" fill="#222"/>
</svg>
<div class="abs" style="left:1910.5px;top:48px;width:8.5px;height:895px;background:#f7f7f7;border-top-right-radius:10px"></div>
<div class="abs" style="left:1911.2px;top:59.9px;width:6.6px;height:275.3px;background:#b3b3b3"></div>
<svg class="abs" style="left:1911px;top:51px" width="8" height="6" viewBox="0 0 8 6"><path d="M1,5 L4,1.5 L7,5 Z" fill="#a0a0a0"/></svg>
<svg class="abs" style="left:1911px;top:934px" width="8" height="6" viewBox="0 0 8 6"><path d="M1,1 L4,4.5 L7,1 Z" fill="#a0a0a0"/></svg></body></html>
